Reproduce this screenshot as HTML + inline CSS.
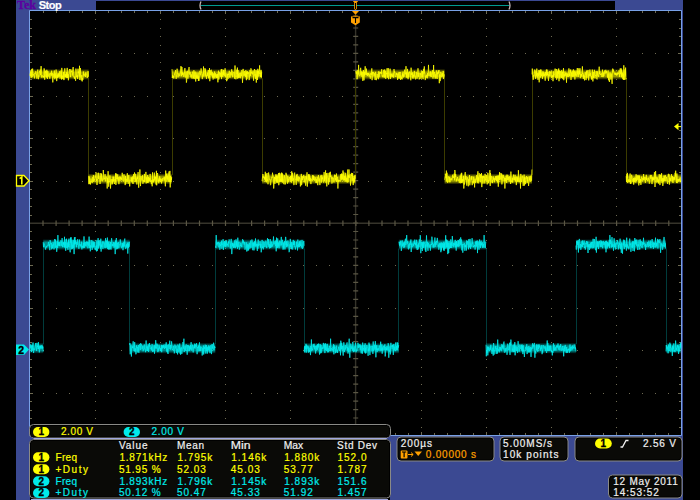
<!DOCTYPE html>
<html><head><meta charset="utf-8"><style>
html,body{margin:0;padding:0;background:#000;width:700px;height:500px;overflow:hidden}
svg{display:block;font-family:"Liberation Sans",sans-serif}
</style></head><body>
<svg width="700" height="500" viewBox="0 0 700 500">
<rect x="0" y="0" width="700" height="500" fill="#000"/>
<rect x="16" y="0" width="667" height="11" fill="#3b4992"/>
<rect x="16" y="0" width="14" height="500" fill="#3b4992"/>
<rect x="390" y="435" width="293" height="65" fill="#3b4992"/>
<rect x="681" y="0" width="2" height="436" fill="#3b4992"/>
<rect x="30" y="11" width="651" height="424" fill="#000"/>
<path d="M29.5 436 V10.5 H681.5 V435.5 H390" stroke="#78a0e6" stroke-width="1" fill="none"/>
<path d="M95 19h1v1h-1zM95 28h1v1h-1zM95 36h1v1h-1zM95 45h1v1h-1zM95 53h1v1h-1zM95 62h1v1h-1zM95 70h1v1h-1zM95 79h1v1h-1zM95 87h1v1h-1zM95 96h1v1h-1zM95 104h1v1h-1zM95 113h1v1h-1zM95 121h1v1h-1zM95 130h1v1h-1zM95 138h1v1h-1zM95 147h1v1h-1zM95 155h1v1h-1zM95 164h1v1h-1zM95 172h1v1h-1zM95 181h1v1h-1zM95 189h1v1h-1zM95 198h1v1h-1zM95 206h1v1h-1zM95 215h1v1h-1zM95 223h1v1h-1zM95 231h1v1h-1zM95 240h1v1h-1zM95 248h1v1h-1zM95 257h1v1h-1zM95 265h1v1h-1zM95 274h1v1h-1zM95 282h1v1h-1zM95 291h1v1h-1zM95 299h1v1h-1zM95 308h1v1h-1zM95 316h1v1h-1zM95 325h1v1h-1zM95 333h1v1h-1zM95 342h1v1h-1zM95 350h1v1h-1zM95 359h1v1h-1zM95 367h1v1h-1zM95 376h1v1h-1zM95 384h1v1h-1zM95 393h1v1h-1zM95 401h1v1h-1zM95 410h1v1h-1zM95 418h1v1h-1zM95 427h1v1h-1zM160 19h1v1h-1zM160 28h1v1h-1zM160 36h1v1h-1zM160 45h1v1h-1zM160 53h1v1h-1zM160 62h1v1h-1zM160 70h1v1h-1zM160 79h1v1h-1zM160 87h1v1h-1zM160 96h1v1h-1zM160 104h1v1h-1zM160 113h1v1h-1zM160 121h1v1h-1zM160 130h1v1h-1zM160 138h1v1h-1zM160 147h1v1h-1zM160 155h1v1h-1zM160 164h1v1h-1zM160 172h1v1h-1zM160 181h1v1h-1zM160 189h1v1h-1zM160 198h1v1h-1zM160 206h1v1h-1zM160 215h1v1h-1zM160 223h1v1h-1zM160 231h1v1h-1zM160 240h1v1h-1zM160 248h1v1h-1zM160 257h1v1h-1zM160 265h1v1h-1zM160 274h1v1h-1zM160 282h1v1h-1zM160 291h1v1h-1zM160 299h1v1h-1zM160 308h1v1h-1zM160 316h1v1h-1zM160 325h1v1h-1zM160 333h1v1h-1zM160 342h1v1h-1zM160 350h1v1h-1zM160 359h1v1h-1zM160 367h1v1h-1zM160 376h1v1h-1zM160 384h1v1h-1zM160 393h1v1h-1zM160 401h1v1h-1zM160 410h1v1h-1zM160 418h1v1h-1zM160 427h1v1h-1zM225 19h1v1h-1zM225 28h1v1h-1zM225 36h1v1h-1zM225 45h1v1h-1zM225 53h1v1h-1zM225 62h1v1h-1zM225 70h1v1h-1zM225 79h1v1h-1zM225 87h1v1h-1zM225 96h1v1h-1zM225 104h1v1h-1zM225 113h1v1h-1zM225 121h1v1h-1zM225 130h1v1h-1zM225 138h1v1h-1zM225 147h1v1h-1zM225 155h1v1h-1zM225 164h1v1h-1zM225 172h1v1h-1zM225 181h1v1h-1zM225 189h1v1h-1zM225 198h1v1h-1zM225 206h1v1h-1zM225 215h1v1h-1zM225 223h1v1h-1zM225 231h1v1h-1zM225 240h1v1h-1zM225 248h1v1h-1zM225 257h1v1h-1zM225 265h1v1h-1zM225 274h1v1h-1zM225 282h1v1h-1zM225 291h1v1h-1zM225 299h1v1h-1zM225 308h1v1h-1zM225 316h1v1h-1zM225 325h1v1h-1zM225 333h1v1h-1zM225 342h1v1h-1zM225 350h1v1h-1zM225 359h1v1h-1zM225 367h1v1h-1zM225 376h1v1h-1zM225 384h1v1h-1zM225 393h1v1h-1zM225 401h1v1h-1zM225 410h1v1h-1zM225 418h1v1h-1zM225 427h1v1h-1zM290 19h1v1h-1zM290 28h1v1h-1zM290 36h1v1h-1zM290 45h1v1h-1zM290 53h1v1h-1zM290 62h1v1h-1zM290 70h1v1h-1zM290 79h1v1h-1zM290 87h1v1h-1zM290 96h1v1h-1zM290 104h1v1h-1zM290 113h1v1h-1zM290 121h1v1h-1zM290 130h1v1h-1zM290 138h1v1h-1zM290 147h1v1h-1zM290 155h1v1h-1zM290 164h1v1h-1zM290 172h1v1h-1zM290 181h1v1h-1zM290 189h1v1h-1zM290 198h1v1h-1zM290 206h1v1h-1zM290 215h1v1h-1zM290 223h1v1h-1zM290 231h1v1h-1zM290 240h1v1h-1zM290 248h1v1h-1zM290 257h1v1h-1zM290 265h1v1h-1zM290 274h1v1h-1zM290 282h1v1h-1zM290 291h1v1h-1zM290 299h1v1h-1zM290 308h1v1h-1zM290 316h1v1h-1zM290 325h1v1h-1zM290 333h1v1h-1zM290 342h1v1h-1zM290 350h1v1h-1zM290 359h1v1h-1zM290 367h1v1h-1zM290 376h1v1h-1zM290 384h1v1h-1zM290 393h1v1h-1zM290 401h1v1h-1zM290 410h1v1h-1zM290 418h1v1h-1zM290 427h1v1h-1zM421 19h1v1h-1zM421 28h1v1h-1zM421 36h1v1h-1zM421 45h1v1h-1zM421 53h1v1h-1zM421 62h1v1h-1zM421 70h1v1h-1zM421 79h1v1h-1zM421 87h1v1h-1zM421 96h1v1h-1zM421 104h1v1h-1zM421 113h1v1h-1zM421 121h1v1h-1zM421 130h1v1h-1zM421 138h1v1h-1zM421 147h1v1h-1zM421 155h1v1h-1zM421 164h1v1h-1zM421 172h1v1h-1zM421 181h1v1h-1zM421 189h1v1h-1zM421 198h1v1h-1zM421 206h1v1h-1zM421 215h1v1h-1zM421 223h1v1h-1zM421 231h1v1h-1zM421 240h1v1h-1zM421 248h1v1h-1zM421 257h1v1h-1zM421 265h1v1h-1zM421 274h1v1h-1zM421 282h1v1h-1zM421 291h1v1h-1zM421 299h1v1h-1zM421 308h1v1h-1zM421 316h1v1h-1zM421 325h1v1h-1zM421 333h1v1h-1zM421 342h1v1h-1zM421 350h1v1h-1zM421 359h1v1h-1zM421 367h1v1h-1zM421 376h1v1h-1zM421 384h1v1h-1zM421 393h1v1h-1zM421 401h1v1h-1zM421 410h1v1h-1zM421 418h1v1h-1zM421 427h1v1h-1zM486 19h1v1h-1zM486 28h1v1h-1zM486 36h1v1h-1zM486 45h1v1h-1zM486 53h1v1h-1zM486 62h1v1h-1zM486 70h1v1h-1zM486 79h1v1h-1zM486 87h1v1h-1zM486 96h1v1h-1zM486 104h1v1h-1zM486 113h1v1h-1zM486 121h1v1h-1zM486 130h1v1h-1zM486 138h1v1h-1zM486 147h1v1h-1zM486 155h1v1h-1zM486 164h1v1h-1zM486 172h1v1h-1zM486 181h1v1h-1zM486 189h1v1h-1zM486 198h1v1h-1zM486 206h1v1h-1zM486 215h1v1h-1zM486 223h1v1h-1zM486 231h1v1h-1zM486 240h1v1h-1zM486 248h1v1h-1zM486 257h1v1h-1zM486 265h1v1h-1zM486 274h1v1h-1zM486 282h1v1h-1zM486 291h1v1h-1zM486 299h1v1h-1zM486 308h1v1h-1zM486 316h1v1h-1zM486 325h1v1h-1zM486 333h1v1h-1zM486 342h1v1h-1zM486 350h1v1h-1zM486 359h1v1h-1zM486 367h1v1h-1zM486 376h1v1h-1zM486 384h1v1h-1zM486 393h1v1h-1zM486 401h1v1h-1zM486 410h1v1h-1zM486 418h1v1h-1zM486 427h1v1h-1zM551 19h1v1h-1zM551 28h1v1h-1zM551 36h1v1h-1zM551 45h1v1h-1zM551 53h1v1h-1zM551 62h1v1h-1zM551 70h1v1h-1zM551 79h1v1h-1zM551 87h1v1h-1zM551 96h1v1h-1zM551 104h1v1h-1zM551 113h1v1h-1zM551 121h1v1h-1zM551 130h1v1h-1zM551 138h1v1h-1zM551 147h1v1h-1zM551 155h1v1h-1zM551 164h1v1h-1zM551 172h1v1h-1zM551 181h1v1h-1zM551 189h1v1h-1zM551 198h1v1h-1zM551 206h1v1h-1zM551 215h1v1h-1zM551 223h1v1h-1zM551 231h1v1h-1zM551 240h1v1h-1zM551 248h1v1h-1zM551 257h1v1h-1zM551 265h1v1h-1zM551 274h1v1h-1zM551 282h1v1h-1zM551 291h1v1h-1zM551 299h1v1h-1zM551 308h1v1h-1zM551 316h1v1h-1zM551 325h1v1h-1zM551 333h1v1h-1zM551 342h1v1h-1zM551 350h1v1h-1zM551 359h1v1h-1zM551 367h1v1h-1zM551 376h1v1h-1zM551 384h1v1h-1zM551 393h1v1h-1zM551 401h1v1h-1zM551 410h1v1h-1zM551 418h1v1h-1zM551 427h1v1h-1zM616 19h1v1h-1zM616 28h1v1h-1zM616 36h1v1h-1zM616 45h1v1h-1zM616 53h1v1h-1zM616 62h1v1h-1zM616 70h1v1h-1zM616 79h1v1h-1zM616 87h1v1h-1zM616 96h1v1h-1zM616 104h1v1h-1zM616 113h1v1h-1zM616 121h1v1h-1zM616 130h1v1h-1zM616 138h1v1h-1zM616 147h1v1h-1zM616 155h1v1h-1zM616 164h1v1h-1zM616 172h1v1h-1zM616 181h1v1h-1zM616 189h1v1h-1zM616 198h1v1h-1zM616 206h1v1h-1zM616 215h1v1h-1zM616 223h1v1h-1zM616 231h1v1h-1zM616 240h1v1h-1zM616 248h1v1h-1zM616 257h1v1h-1zM616 265h1v1h-1zM616 274h1v1h-1zM616 282h1v1h-1zM616 291h1v1h-1zM616 299h1v1h-1zM616 308h1v1h-1zM616 316h1v1h-1zM616 325h1v1h-1zM616 333h1v1h-1zM616 342h1v1h-1zM616 350h1v1h-1zM616 359h1v1h-1zM616 367h1v1h-1zM616 376h1v1h-1zM616 384h1v1h-1zM616 393h1v1h-1zM616 401h1v1h-1zM616 410h1v1h-1zM616 418h1v1h-1zM616 427h1v1h-1zM43 53h1v1h-1zM56 53h1v1h-1zM69 53h1v1h-1zM82 53h1v1h-1zM108 53h1v1h-1zM121 53h1v1h-1zM134 53h1v1h-1zM147 53h1v1h-1zM173 53h1v1h-1zM186 53h1v1h-1zM199 53h1v1h-1zM212 53h1v1h-1zM238 53h1v1h-1zM251 53h1v1h-1zM264 53h1v1h-1zM277 53h1v1h-1zM303 53h1v1h-1zM316 53h1v1h-1zM329 53h1v1h-1zM342 53h1v1h-1zM368 53h1v1h-1zM381 53h1v1h-1zM395 53h1v1h-1zM408 53h1v1h-1zM434 53h1v1h-1zM447 53h1v1h-1zM460 53h1v1h-1zM473 53h1v1h-1zM499 53h1v1h-1zM512 53h1v1h-1zM525 53h1v1h-1zM538 53h1v1h-1zM564 53h1v1h-1zM577 53h1v1h-1zM590 53h1v1h-1zM603 53h1v1h-1zM629 53h1v1h-1zM642 53h1v1h-1zM655 53h1v1h-1zM668 53h1v1h-1zM43 96h1v1h-1zM56 96h1v1h-1zM69 96h1v1h-1zM82 96h1v1h-1zM108 96h1v1h-1zM121 96h1v1h-1zM134 96h1v1h-1zM147 96h1v1h-1zM173 96h1v1h-1zM186 96h1v1h-1zM199 96h1v1h-1zM212 96h1v1h-1zM238 96h1v1h-1zM251 96h1v1h-1zM264 96h1v1h-1zM277 96h1v1h-1zM303 96h1v1h-1zM316 96h1v1h-1zM329 96h1v1h-1zM342 96h1v1h-1zM368 96h1v1h-1zM381 96h1v1h-1zM395 96h1v1h-1zM408 96h1v1h-1zM434 96h1v1h-1zM447 96h1v1h-1zM460 96h1v1h-1zM473 96h1v1h-1zM499 96h1v1h-1zM512 96h1v1h-1zM525 96h1v1h-1zM538 96h1v1h-1zM564 96h1v1h-1zM577 96h1v1h-1zM590 96h1v1h-1zM603 96h1v1h-1zM629 96h1v1h-1zM642 96h1v1h-1zM655 96h1v1h-1zM668 96h1v1h-1zM43 138h1v1h-1zM56 138h1v1h-1zM69 138h1v1h-1zM82 138h1v1h-1zM108 138h1v1h-1zM121 138h1v1h-1zM134 138h1v1h-1zM147 138h1v1h-1zM173 138h1v1h-1zM186 138h1v1h-1zM199 138h1v1h-1zM212 138h1v1h-1zM238 138h1v1h-1zM251 138h1v1h-1zM264 138h1v1h-1zM277 138h1v1h-1zM303 138h1v1h-1zM316 138h1v1h-1zM329 138h1v1h-1zM342 138h1v1h-1zM368 138h1v1h-1zM381 138h1v1h-1zM395 138h1v1h-1zM408 138h1v1h-1zM434 138h1v1h-1zM447 138h1v1h-1zM460 138h1v1h-1zM473 138h1v1h-1zM499 138h1v1h-1zM512 138h1v1h-1zM525 138h1v1h-1zM538 138h1v1h-1zM564 138h1v1h-1zM577 138h1v1h-1zM590 138h1v1h-1zM603 138h1v1h-1zM629 138h1v1h-1zM642 138h1v1h-1zM655 138h1v1h-1zM668 138h1v1h-1zM43 181h1v1h-1zM56 181h1v1h-1zM69 181h1v1h-1zM82 181h1v1h-1zM108 181h1v1h-1zM121 181h1v1h-1zM134 181h1v1h-1zM147 181h1v1h-1zM173 181h1v1h-1zM186 181h1v1h-1zM199 181h1v1h-1zM212 181h1v1h-1zM238 181h1v1h-1zM251 181h1v1h-1zM264 181h1v1h-1zM277 181h1v1h-1zM303 181h1v1h-1zM316 181h1v1h-1zM329 181h1v1h-1zM342 181h1v1h-1zM368 181h1v1h-1zM381 181h1v1h-1zM395 181h1v1h-1zM408 181h1v1h-1zM434 181h1v1h-1zM447 181h1v1h-1zM460 181h1v1h-1zM473 181h1v1h-1zM499 181h1v1h-1zM512 181h1v1h-1zM525 181h1v1h-1zM538 181h1v1h-1zM564 181h1v1h-1zM577 181h1v1h-1zM590 181h1v1h-1zM603 181h1v1h-1zM629 181h1v1h-1zM642 181h1v1h-1zM655 181h1v1h-1zM668 181h1v1h-1zM43 265h1v1h-1zM56 265h1v1h-1zM69 265h1v1h-1zM82 265h1v1h-1zM108 265h1v1h-1zM121 265h1v1h-1zM134 265h1v1h-1zM147 265h1v1h-1zM173 265h1v1h-1zM186 265h1v1h-1zM199 265h1v1h-1zM212 265h1v1h-1zM238 265h1v1h-1zM251 265h1v1h-1zM264 265h1v1h-1zM277 265h1v1h-1zM303 265h1v1h-1zM316 265h1v1h-1zM329 265h1v1h-1zM342 265h1v1h-1zM368 265h1v1h-1zM381 265h1v1h-1zM395 265h1v1h-1zM408 265h1v1h-1zM434 265h1v1h-1zM447 265h1v1h-1zM460 265h1v1h-1zM473 265h1v1h-1zM499 265h1v1h-1zM512 265h1v1h-1zM525 265h1v1h-1zM538 265h1v1h-1zM564 265h1v1h-1zM577 265h1v1h-1zM590 265h1v1h-1zM603 265h1v1h-1zM629 265h1v1h-1zM642 265h1v1h-1zM655 265h1v1h-1zM668 265h1v1h-1zM43 308h1v1h-1zM56 308h1v1h-1zM69 308h1v1h-1zM82 308h1v1h-1zM108 308h1v1h-1zM121 308h1v1h-1zM134 308h1v1h-1zM147 308h1v1h-1zM173 308h1v1h-1zM186 308h1v1h-1zM199 308h1v1h-1zM212 308h1v1h-1zM238 308h1v1h-1zM251 308h1v1h-1zM264 308h1v1h-1zM277 308h1v1h-1zM303 308h1v1h-1zM316 308h1v1h-1zM329 308h1v1h-1zM342 308h1v1h-1zM368 308h1v1h-1zM381 308h1v1h-1zM395 308h1v1h-1zM408 308h1v1h-1zM434 308h1v1h-1zM447 308h1v1h-1zM460 308h1v1h-1zM473 308h1v1h-1zM499 308h1v1h-1zM512 308h1v1h-1zM525 308h1v1h-1zM538 308h1v1h-1zM564 308h1v1h-1zM577 308h1v1h-1zM590 308h1v1h-1zM603 308h1v1h-1zM629 308h1v1h-1zM642 308h1v1h-1zM655 308h1v1h-1zM668 308h1v1h-1zM43 350h1v1h-1zM56 350h1v1h-1zM69 350h1v1h-1zM82 350h1v1h-1zM108 350h1v1h-1zM121 350h1v1h-1zM134 350h1v1h-1zM147 350h1v1h-1zM173 350h1v1h-1zM186 350h1v1h-1zM199 350h1v1h-1zM212 350h1v1h-1zM238 350h1v1h-1zM251 350h1v1h-1zM264 350h1v1h-1zM277 350h1v1h-1zM303 350h1v1h-1zM316 350h1v1h-1zM329 350h1v1h-1zM342 350h1v1h-1zM368 350h1v1h-1zM381 350h1v1h-1zM395 350h1v1h-1zM408 350h1v1h-1zM434 350h1v1h-1zM447 350h1v1h-1zM460 350h1v1h-1zM473 350h1v1h-1zM499 350h1v1h-1zM512 350h1v1h-1zM525 350h1v1h-1zM538 350h1v1h-1zM564 350h1v1h-1zM577 350h1v1h-1zM590 350h1v1h-1zM603 350h1v1h-1zM629 350h1v1h-1zM642 350h1v1h-1zM655 350h1v1h-1zM668 350h1v1h-1zM43 393h1v1h-1zM56 393h1v1h-1zM69 393h1v1h-1zM82 393h1v1h-1zM108 393h1v1h-1zM121 393h1v1h-1zM134 393h1v1h-1zM147 393h1v1h-1zM173 393h1v1h-1zM186 393h1v1h-1zM199 393h1v1h-1zM212 393h1v1h-1zM238 393h1v1h-1zM251 393h1v1h-1zM264 393h1v1h-1zM277 393h1v1h-1zM303 393h1v1h-1zM316 393h1v1h-1zM329 393h1v1h-1zM342 393h1v1h-1zM368 393h1v1h-1zM381 393h1v1h-1zM395 393h1v1h-1zM408 393h1v1h-1zM434 393h1v1h-1zM447 393h1v1h-1zM460 393h1v1h-1zM473 393h1v1h-1zM499 393h1v1h-1zM512 393h1v1h-1zM525 393h1v1h-1zM538 393h1v1h-1zM564 393h1v1h-1zM577 393h1v1h-1zM590 393h1v1h-1zM603 393h1v1h-1zM629 393h1v1h-1zM642 393h1v1h-1zM655 393h1v1h-1zM668 393h1v1h-1zM43 11h1v2h-1zM43 433h1v2h-1zM30 19h2v1h-2zM679 19h2v1h-2zM56 11h1v2h-1zM56 433h1v2h-1zM30 28h2v1h-2zM679 28h2v1h-2zM69 11h1v2h-1zM69 433h1v2h-1zM30 36h2v1h-2zM679 36h2v1h-2zM82 11h1v2h-1zM82 433h1v2h-1zM30 45h2v1h-2zM679 45h2v1h-2zM95 11h1v3h-1zM95 432h1v3h-1zM30 53h3v1h-3zM678 53h3v1h-3zM108 11h1v2h-1zM108 433h1v2h-1zM30 62h2v1h-2zM679 62h2v1h-2zM121 11h1v2h-1zM121 433h1v2h-1zM30 70h2v1h-2zM679 70h2v1h-2zM134 11h1v2h-1zM134 433h1v2h-1zM30 79h2v1h-2zM679 79h2v1h-2zM147 11h1v2h-1zM147 433h1v2h-1zM30 87h2v1h-2zM679 87h2v1h-2zM160 11h1v3h-1zM160 432h1v3h-1zM30 96h3v1h-3zM678 96h3v1h-3zM173 11h1v2h-1zM173 433h1v2h-1zM30 104h2v1h-2zM679 104h2v1h-2zM186 11h1v2h-1zM186 433h1v2h-1zM30 113h2v1h-2zM679 113h2v1h-2zM199 11h1v2h-1zM199 433h1v2h-1zM30 121h2v1h-2zM679 121h2v1h-2zM212 11h1v2h-1zM212 433h1v2h-1zM30 130h2v1h-2zM679 130h2v1h-2zM225 11h1v3h-1zM225 432h1v3h-1zM30 138h3v1h-3zM678 138h3v1h-3zM238 11h1v2h-1zM238 433h1v2h-1zM30 147h2v1h-2zM679 147h2v1h-2zM251 11h1v2h-1zM251 433h1v2h-1zM30 155h2v1h-2zM679 155h2v1h-2zM264 11h1v2h-1zM264 433h1v2h-1zM30 164h2v1h-2zM679 164h2v1h-2zM277 11h1v2h-1zM277 433h1v2h-1zM30 172h2v1h-2zM679 172h2v1h-2zM290 11h1v3h-1zM290 432h1v3h-1zM30 181h3v1h-3zM678 181h3v1h-3zM303 11h1v2h-1zM303 433h1v2h-1zM30 189h2v1h-2zM679 189h2v1h-2zM316 11h1v2h-1zM316 433h1v2h-1zM30 198h2v1h-2zM679 198h2v1h-2zM329 11h1v2h-1zM329 433h1v2h-1zM30 206h2v1h-2zM679 206h2v1h-2zM342 11h1v2h-1zM342 433h1v2h-1zM30 215h2v1h-2zM679 215h2v1h-2zM355 11h1v3h-1zM355 432h1v3h-1zM30 223h3v1h-3zM678 223h3v1h-3zM368 11h1v2h-1zM368 433h1v2h-1zM30 231h2v1h-2zM679 231h2v1h-2zM381 11h1v2h-1zM381 433h1v2h-1zM30 240h2v1h-2zM679 240h2v1h-2zM395 11h1v2h-1zM395 433h1v2h-1zM30 248h2v1h-2zM679 248h2v1h-2zM408 11h1v2h-1zM408 433h1v2h-1zM30 257h2v1h-2zM679 257h2v1h-2zM421 11h1v3h-1zM421 432h1v3h-1zM30 265h3v1h-3zM678 265h3v1h-3zM434 11h1v2h-1zM434 433h1v2h-1zM30 274h2v1h-2zM679 274h2v1h-2zM447 11h1v2h-1zM447 433h1v2h-1zM30 282h2v1h-2zM679 282h2v1h-2zM460 11h1v2h-1zM460 433h1v2h-1zM30 291h2v1h-2zM679 291h2v1h-2zM473 11h1v2h-1zM473 433h1v2h-1zM30 299h2v1h-2zM679 299h2v1h-2zM486 11h1v3h-1zM486 432h1v3h-1zM30 308h3v1h-3zM678 308h3v1h-3zM499 11h1v2h-1zM499 433h1v2h-1zM30 316h2v1h-2zM679 316h2v1h-2zM512 11h1v2h-1zM512 433h1v2h-1zM30 325h2v1h-2zM679 325h2v1h-2zM525 11h1v2h-1zM525 433h1v2h-1zM30 333h2v1h-2zM679 333h2v1h-2zM538 11h1v2h-1zM538 433h1v2h-1zM30 342h2v1h-2zM679 342h2v1h-2zM551 11h1v3h-1zM551 432h1v3h-1zM30 350h3v1h-3zM678 350h3v1h-3zM564 11h1v2h-1zM564 433h1v2h-1zM30 359h2v1h-2zM679 359h2v1h-2zM577 11h1v2h-1zM577 433h1v2h-1zM30 367h2v1h-2zM679 367h2v1h-2zM590 11h1v2h-1zM590 433h1v2h-1zM30 376h2v1h-2zM679 376h2v1h-2zM603 11h1v2h-1zM603 433h1v2h-1zM30 384h2v1h-2zM679 384h2v1h-2zM616 11h1v3h-1zM616 432h1v3h-1zM30 393h3v1h-3zM678 393h3v1h-3zM629 11h1v2h-1zM629 433h1v2h-1zM30 401h2v1h-2zM679 401h2v1h-2zM642 11h1v2h-1zM642 433h1v2h-1zM30 410h2v1h-2zM679 410h2v1h-2zM655 11h1v2h-1zM655 433h1v2h-1zM30 418h2v1h-2zM679 418h2v1h-2zM668 11h1v2h-1zM668 433h1v2h-1zM30 427h2v1h-2zM679 427h2v1h-2z" fill="#6e6a52" opacity="1"/>
<path d="M355.6 11 V435 M30 223.2 H681" stroke="#36342b" stroke-width="1.4"/>
<path d="M353.2 19.5h5M43.0 220.4v5.6M353.2 28.0h5M56.1 220.4v5.6M353.2 36.4h5M69.1 220.4v5.6M353.2 44.9h5M82.1 220.4v5.6M353.2 53.4h5M95.2 220.4v5.6M353.2 61.9h5M108.2 220.4v5.6M353.2 70.4h5M121.3 220.4v5.6M353.2 78.8h5M134.3 220.4v5.6M353.2 87.3h5M147.3 220.4v5.6M353.2 95.8h5M160.4 220.4v5.6M353.2 104.3h5M173.4 220.4v5.6M353.2 112.8h5M186.4 220.4v5.6M353.2 121.2h5M199.5 220.4v5.6M353.2 129.7h5M212.5 220.4v5.6M353.2 138.2h5M225.5 220.4v5.6M353.2 146.7h5M238.6 220.4v5.6M353.2 155.2h5M251.6 220.4v5.6M353.2 163.6h5M264.6 220.4v5.6M353.2 172.1h5M277.7 220.4v5.6M353.2 180.6h5M290.7 220.4v5.6M353.2 189.1h5M303.8 220.4v5.6M353.2 197.6h5M316.8 220.4v5.6M353.2 206.0h5M329.8 220.4v5.6M353.2 214.5h5M342.9 220.4v5.6M353.2 223.0h5M355.9 220.4v5.6M353.2 231.5h5M368.9 220.4v5.6M353.2 240.0h5M382.0 220.4v5.6M353.2 248.4h5M395.0 220.4v5.6M353.2 256.9h5M408.0 220.4v5.6M353.2 265.4h5M421.1 220.4v5.6M353.2 273.9h5M434.1 220.4v5.6M353.2 282.4h5M447.2 220.4v5.6M353.2 290.8h5M460.2 220.4v5.6M353.2 299.3h5M473.2 220.4v5.6M353.2 307.8h5M486.3 220.4v5.6M353.2 316.3h5M499.3 220.4v5.6M353.2 324.8h5M512.3 220.4v5.6M353.2 333.2h5M525.4 220.4v5.6M353.2 341.7h5M538.4 220.4v5.6M353.2 350.2h5M551.4 220.4v5.6M353.2 358.7h5M564.5 220.4v5.6M353.2 367.2h5M577.5 220.4v5.6M353.2 375.6h5M590.5 220.4v5.6M353.2 384.1h5M603.6 220.4v5.6M353.2 392.6h5M616.6 220.4v5.6M353.2 401.1h5M629.7 220.4v5.6M353.2 409.6h5M642.7 220.4v5.6M353.2 418.0h5M655.7 220.4v5.6M353.2 426.5h5M668.8 220.4v5.6" stroke="#5a5644" stroke-width="1.2"/>
<path d="M88.5 78.4V175.0M172.5 78.4V175.0M262.5 78.4V175.0M355.5 78.4V175.0M444.5 78.4V175.0M532.5 78.4V175.0M626.5 78.4V175.0" stroke="#3c3c00" stroke-width="1" fill="none"/>
<linearGradient id="gffff00" x1="0" y1="0" x2="0" y2="1"><stop offset="0" stop-color="#ffff00" stop-opacity="0"/><stop offset="0.3" stop-color="#ffff00" stop-opacity="0.6"/><stop offset="0.7" stop-color="#ffff00" stop-opacity="0.6"/><stop offset="1" stop-color="#ffff00" stop-opacity="0"/></linearGradient>
<rect x="30.0" y="68.9" width="58.6" height="11" fill="url(#gffff00)"/>
<rect x="88.6" y="173.5" width="83.4" height="11" fill="url(#gffff00)"/>
<rect x="172.0" y="68.9" width="90.0" height="11" fill="url(#gffff00)"/>
<rect x="262.0" y="173.5" width="93.6" height="11" fill="url(#gffff00)"/>
<rect x="355.6" y="68.9" width="89.0" height="11" fill="url(#gffff00)"/>
<rect x="444.6" y="173.5" width="87.4" height="11" fill="url(#gffff00)"/>
<rect x="532.0" y="68.9" width="94.2" height="11" fill="url(#gffff00)"/>
<rect x="626.2" y="173.5" width="54.8" height="11" fill="url(#gffff00)"/>
<path d="M30.00 73.6L30.30 76.1L30.60 71.3L30.90 73.7L31.20 77.8L31.50 75.2L31.80 68.9L32.10 77.2L32.40 68.8L32.70 68.6L33.00 75.4L33.30 74.2L33.60 75.4L33.90 75.7L34.20 76.2L34.50 78.4L34.80 73.3L35.10 74.0L35.40 72.9L35.70 71.2L36.00 71.7L36.30 75.2L36.60 74.6L36.90 78.7L37.20 74.0L37.50 71.7L37.80 69.6L38.10 77.1L38.40 79.2L38.70 75.6L39.00 76.4L39.30 72.4L39.60 71.2L39.90 72.6L40.20 69.6L40.50 75.2L40.80 68.1L41.10 66.1L41.40 68.1L41.70 77.6L42.00 75.2L42.30 75.8L42.60 76.1L42.90 76.2L43.20 77.6L43.50 76.1L43.80 77.2L44.10 68.4L44.40 70.1L44.70 79.7L45.00 75.5L45.30 76.5L45.60 70.7L45.90 73.0L46.20 71.5L46.50 77.5L46.80 69.8L47.10 74.0L47.40 79.0L47.70 71.0L48.00 71.8L48.30 76.5L48.60 75.5L48.90 74.9L49.20 73.4L49.50 75.3L49.80 78.7L50.10 76.3L50.40 73.0L50.70 73.2L51.00 73.3L51.30 75.7L51.60 70.7L51.90 75.2L52.20 73.0L52.50 76.6L52.80 82.4L53.10 75.6L53.40 73.7L53.70 74.2L54.00 77.7L54.30 70.5L54.60 77.2L54.90 79.3L55.20 73.3L55.50 76.5L55.80 78.0L56.10 69.6L56.40 75.0L56.70 81.1L57.00 77.0L57.30 74.9L57.60 77.9L57.90 73.4L58.20 77.4L58.50 73.5L58.80 75.1L59.10 76.5L59.40 76.4L59.70 71.2L60.00 78.6L60.30 76.9L60.60 74.4L60.90 70.6L61.20 71.5L61.50 79.5L61.80 67.9L62.10 79.0L62.40 75.7L62.70 75.8L63.00 78.1L63.30 79.3L63.60 71.9L63.90 80.1L64.20 79.1L64.50 73.5L64.80 68.3L65.10 77.1L65.40 74.4L65.70 77.1L66.00 74.2L66.30 77.8L66.60 72.2L66.90 77.3L67.20 67.9L67.50 77.9L67.80 73.8L68.10 74.3L68.40 80.3L68.70 74.5L69.00 73.7L69.30 70.2L69.60 69.0L69.90 72.4L70.20 74.4L70.50 77.1L70.80 69.2L71.10 72.3L71.40 71.4L71.70 71.9L72.00 70.5L72.30 75.6L72.60 72.3L72.90 68.0L73.20 67.0L73.50 71.5L73.80 77.0L74.10 76.9L74.40 78.8L74.70 76.6L75.00 77.4L75.30 78.7L75.60 80.8L75.90 68.6L76.20 71.3L76.50 76.7L76.80 76.3L77.10 77.4L77.40 75.4L77.70 79.0L78.00 68.7L78.30 73.2L78.60 71.6L78.90 71.6L79.20 76.5L79.50 65.8L79.80 80.0L80.10 75.8L80.40 68.0L80.70 77.8L81.00 78.8L81.30 80.4L81.60 75.4L81.90 75.0L82.20 81.4L82.50 77.8L82.80 80.0L83.10 77.7L83.40 71.5L83.70 75.3L84.00 74.2L84.30 76.1L84.60 75.9L84.90 75.6L85.20 73.3L85.50 77.0L85.80 72.3L86.10 74.4L86.40 74.4L86.70 75.0L87.00 75.8L87.30 77.9L87.60 75.9L87.90 71.2L88.20 71.3L88.50 76.8M88.60 175.6L88.90 184.2L89.20 176.5L89.50 180.7L89.80 183.9L90.10 181.3L90.40 184.5L90.70 182.2L91.00 178.5L91.30 181.4L91.60 181.0L91.90 182.0L92.20 183.1L92.50 178.3L92.80 177.1L93.10 181.9L93.40 175.1L93.70 179.6L94.00 181.6L94.30 179.1L94.60 179.7L94.90 179.2L95.20 175.5L95.50 176.9L95.80 177.6L96.10 172.4L96.40 180.9L96.70 178.8L97.00 185.0L97.30 180.7L97.60 178.4L97.90 173.0L98.20 172.7L98.50 178.8L98.80 173.0L99.10 175.5L99.40 179.1L99.70 179.8L100.00 184.0L100.30 182.8L100.60 175.5L100.90 173.0L101.20 180.6L101.50 173.8L101.80 178.3L102.10 178.0L102.40 181.3L102.70 180.2L103.00 178.4L103.30 170.0L103.60 174.0L103.90 179.7L104.20 178.2L104.50 178.0L104.80 178.9L105.10 174.2L105.40 181.4L105.70 180.0L106.00 177.8L106.30 176.6L106.60 177.4L106.90 179.3L107.20 188.5L107.50 177.9L107.80 182.7L108.10 171.2L108.40 181.0L108.70 186.7L109.00 181.5L109.30 182.1L109.60 180.7L109.90 175.4L110.20 179.8L110.50 188.5L110.80 182.8L111.10 179.1L111.40 180.9L111.70 181.3L112.00 184.5L112.30 179.1L112.60 183.7L112.90 176.7L113.20 176.7L113.50 181.4L113.80 176.8L114.10 181.7L114.40 184.0L114.70 182.7L115.00 179.0L115.30 181.6L115.60 173.2L115.90 184.9L116.20 174.0L116.50 173.7L116.80 178.8L117.10 178.0L117.40 179.1L117.70 174.3L118.00 180.5L118.30 178.2L118.60 177.4L118.90 184.2L119.20 177.4L119.50 176.7L119.80 180.0L120.10 180.7L120.40 176.7L120.70 179.0L121.00 177.3L121.30 179.6L121.60 178.2L121.90 180.2L122.20 172.8L122.50 176.1L122.80 175.6L123.10 181.1L123.40 181.5L123.70 180.0L124.00 174.3L124.30 178.9L124.60 178.7L124.90 181.5L125.20 185.1L125.50 175.9L125.80 184.1L126.10 180.0L126.40 178.9L126.70 179.0L127.00 182.0L127.30 173.2L127.60 180.5L127.90 180.2L128.20 183.9L128.50 177.1L128.80 175.0L129.10 180.1L129.40 179.8L129.70 186.4L130.00 180.7L130.30 180.8L130.60 180.0L130.90 179.8L131.20 177.2L131.50 181.6L131.80 177.8L132.10 182.5L132.40 181.8L132.70 176.5L133.00 184.0L133.30 176.9L133.60 174.1L133.90 179.1L134.20 175.3L134.50 172.5L134.80 177.2L135.10 181.9L135.40 180.6L135.70 173.8L136.00 181.8L136.30 178.5L136.60 180.0L136.90 184.5L137.20 176.9L137.50 179.1L137.80 174.9L138.10 172.1L138.40 181.1L138.70 187.7L139.00 182.1L139.30 180.2L139.60 177.8L139.90 169.5L140.20 182.0L140.50 186.1L140.80 177.4L141.10 176.2L141.40 179.1L141.70 179.2L142.00 180.6L142.30 178.5L142.60 175.2L142.90 183.8L143.20 182.6L143.50 180.1L143.80 180.1L144.10 181.9L144.40 173.9L144.70 182.2L145.00 180.2L145.30 179.3L145.60 178.9L145.90 171.9L146.20 183.4L146.50 177.8L146.80 177.2L147.10 181.4L147.40 183.0L147.70 175.0L148.00 179.4L148.30 182.7L148.60 177.1L148.90 180.6L149.20 180.9L149.50 178.1L149.80 181.5L150.10 173.9L150.40 177.7L150.70 181.8L151.00 180.8L151.30 184.2L151.60 183.1L151.90 179.9L152.20 186.3L152.50 172.4L152.80 182.2L153.10 181.2L153.40 179.3L153.70 182.4L154.00 178.9L154.30 172.6L154.60 180.5L154.90 176.7L155.20 178.8L155.50 176.8L155.80 182.9L156.10 184.6L156.40 170.8L156.70 185.3L157.00 180.7L157.30 174.5L157.60 173.0L157.90 180.0L158.20 181.7L158.50 179.7L158.80 183.3L159.10 178.3L159.40 181.4L159.70 176.3L160.00 180.5L160.30 178.5L160.60 179.6L160.90 182.1L161.20 178.9L161.50 183.5L161.80 181.9L162.10 179.2L162.40 178.2L162.70 181.1L163.00 180.4L163.30 179.6L163.60 178.1L163.90 177.9L164.20 176.7L164.50 180.4L164.80 177.4L165.10 182.9L165.40 186.3L165.70 170.6L166.00 178.5L166.30 176.8L166.60 173.6L166.90 181.8L167.20 175.8L167.50 179.5L167.80 174.4L168.10 173.4L168.40 176.3L168.70 181.8L169.00 171.5L169.30 178.0L169.60 181.9L169.90 170.9L170.20 187.4L170.50 175.9L170.80 181.9L171.10 177.5L171.40 179.9L171.70 177.3M172.00 69.1L172.30 78.0L172.60 75.1L172.90 77.7L173.20 76.2L173.50 76.1L173.80 78.5L174.10 75.5L174.40 75.3L174.70 73.0L175.00 72.4L175.30 72.4L175.60 70.1L175.90 76.6L176.20 78.9L176.50 75.1L176.80 74.9L177.10 68.7L177.40 72.9L177.70 74.7L178.00 77.4L178.30 76.3L178.60 73.5L178.90 73.4L179.20 73.3L179.50 74.3L179.80 76.1L180.10 73.9L180.40 73.7L180.70 68.4L181.00 66.1L181.30 74.8L181.60 76.2L181.90 67.0L182.20 74.5L182.50 72.5L182.80 75.1L183.10 72.7L183.40 75.1L183.70 76.9L184.00 76.4L184.30 74.9L184.60 71.4L184.90 68.1L185.20 77.4L185.50 77.1L185.80 77.3L186.10 71.4L186.40 82.6L186.70 80.7L187.00 75.2L187.30 71.9L187.60 70.8L187.90 78.7L188.20 74.4L188.50 73.4L188.80 68.3L189.10 67.1L189.40 74.3L189.70 74.6L190.00 71.8L190.30 72.1L190.60 76.0L190.90 77.4L191.20 77.5L191.50 74.5L191.80 75.1L192.10 78.7L192.40 71.7L192.70 71.8L193.00 74.5L193.30 76.3L193.60 78.4L193.90 70.2L194.20 79.1L194.50 74.7L194.80 72.2L195.10 71.6L195.40 74.5L195.70 81.5L196.00 72.4L196.30 75.8L196.60 78.6L196.90 74.7L197.20 75.8L197.50 78.7L197.80 75.2L198.10 72.5L198.40 81.0L198.70 76.5L199.00 80.8L199.30 74.7L199.60 74.2L199.90 70.8L200.20 74.5L200.50 75.3L200.80 72.2L201.10 68.4L201.40 71.1L201.70 73.2L202.00 73.9L202.30 79.1L202.60 74.8L202.90 74.0L203.20 74.1L203.50 66.5L203.80 76.5L204.10 72.4L204.40 70.9L204.70 70.7L205.00 68.2L205.30 75.6L205.60 69.5L205.90 76.4L206.20 75.5L206.50 78.9L206.80 74.9L207.10 75.0L207.40 72.7L207.70 75.9L208.00 72.7L208.30 70.0L208.60 78.4L208.90 76.2L209.20 77.3L209.50 68.1L209.80 81.2L210.10 70.3L210.40 75.1L210.70 75.0L211.00 70.3L211.30 69.8L211.60 75.6L211.90 75.3L212.20 71.9L212.50 77.5L212.80 73.3L213.10 79.5L213.40 78.2L213.70 73.5L214.00 77.7L214.30 75.1L214.60 71.5L214.90 78.6L215.20 75.3L215.50 73.3L215.80 76.6L216.10 74.4L216.40 78.2L216.70 74.5L217.00 75.9L217.30 77.9L217.60 73.9L217.90 82.3L218.20 73.2L218.50 70.7L218.80 79.5L219.10 77.2L219.40 72.3L219.70 72.2L220.00 75.5L220.30 72.9L220.60 75.1L220.90 76.9L221.20 69.4L221.50 79.1L221.80 69.0L222.10 73.3L222.40 72.7L222.70 76.8L223.00 71.6L223.30 69.8L223.60 75.0L223.90 70.1L224.20 76.2L224.50 72.8L224.80 72.6L225.10 68.3L225.40 74.4L225.70 77.3L226.00 73.4L226.30 76.3L226.60 81.2L226.90 79.4L227.20 80.2L227.50 73.8L227.80 76.0L228.10 78.8L228.40 73.7L228.70 75.0L229.00 73.0L229.30 70.8L229.60 77.2L229.90 77.9L230.20 77.3L230.50 72.5L230.80 72.3L231.10 75.5L231.40 75.2L231.70 69.3L232.00 72.1L232.30 71.6L232.60 77.2L232.90 76.4L233.20 72.7L233.50 72.6L233.80 72.0L234.10 72.1L234.40 76.4L234.70 78.8L235.00 65.5L235.30 75.0L235.60 77.5L235.90 79.3L236.20 77.9L236.50 77.0L236.80 69.7L237.10 74.0L237.40 67.6L237.70 78.7L238.00 70.0L238.30 77.9L238.60 73.7L238.90 75.3L239.20 77.8L239.50 74.7L239.80 72.8L240.10 76.5L240.40 78.2L240.70 72.9L241.00 72.6L241.30 75.8L241.60 76.1L241.90 70.0L242.20 75.7L242.50 82.8L242.80 76.9L243.10 68.9L243.40 72.8L243.70 73.9L244.00 75.9L244.30 72.3L244.60 71.2L244.90 75.3L245.20 73.9L245.50 76.8L245.80 70.2L246.10 76.4L246.40 80.2L246.70 71.6L247.00 79.2L247.30 71.2L247.60 73.7L247.90 74.0L248.20 73.0L248.50 72.3L248.80 75.0L249.10 80.1L249.40 79.2L249.70 71.1L250.00 69.9L250.30 70.8L250.60 75.9L250.90 68.3L251.20 69.1L251.50 73.4L251.80 72.0L252.10 73.5L252.40 73.3L252.70 74.4L253.00 70.5L253.30 74.6L253.60 80.7L253.90 74.7L254.20 71.2L254.50 69.0L254.80 75.7L255.10 74.1L255.40 78.9L255.70 75.2L256.00 69.9L256.30 82.6L256.60 75.1L256.90 73.9L257.20 70.9L257.50 80.0L257.80 68.8L258.10 73.5L258.40 70.7L258.70 76.4L259.00 76.0L259.30 71.4L259.60 65.4L259.90 74.0L260.20 73.0L260.50 76.9L260.80 70.6L261.10 70.1L261.40 77.5L261.70 71.7M262.00 181.1L262.30 179.1L262.60 175.8L262.90 174.1L263.20 175.6L263.50 175.9L263.80 178.0L264.10 176.9L264.40 179.1L264.70 177.5L265.00 180.1L265.30 171.8L265.60 181.6L265.90 173.8L266.20 177.9L266.50 182.3L266.80 174.2L267.10 173.0L267.40 180.6L267.70 179.4L268.00 184.3L268.30 177.2L268.60 172.5L268.90 174.8L269.20 177.7L269.50 179.8L269.80 179.6L270.10 179.5L270.40 185.2L270.70 184.9L271.00 179.4L271.30 179.5L271.60 178.8L271.90 176.9L272.20 177.5L272.50 172.7L272.80 175.4L273.10 175.2L273.40 178.8L273.70 188.5L274.00 183.8L274.30 179.4L274.60 177.0L274.90 183.9L275.20 177.8L275.50 179.1L275.80 174.4L276.10 180.9L276.40 175.9L276.70 182.6L277.00 174.6L277.30 182.8L277.60 176.5L277.90 177.9L278.20 177.2L278.50 173.1L278.80 185.2L279.10 178.1L279.40 172.8L279.70 182.0L280.00 173.4L280.30 174.8L280.60 181.6L280.90 179.0L281.20 181.8L281.50 172.7L281.80 181.5L282.10 172.9L282.40 182.6L282.70 174.2L283.00 178.2L283.30 180.1L283.60 180.7L283.90 184.2L284.20 175.1L284.50 175.9L284.80 178.8L285.10 184.5L285.40 184.1L285.70 182.1L286.00 172.8L286.30 175.6L286.60 174.6L286.90 179.6L287.20 181.2L287.50 183.6L287.80 175.7L288.10 181.3L288.40 182.2L288.70 178.9L289.00 179.4L289.30 177.1L289.60 178.3L289.90 178.9L290.20 181.5L290.50 176.2L290.80 179.6L291.10 175.6L291.40 182.6L291.70 171.3L292.00 179.6L292.30 181.0L292.60 172.8L292.90 176.6L293.20 180.0L293.50 178.4L293.80 185.1L294.10 184.7L294.40 173.8L294.70 172.6L295.00 177.2L295.30 179.6L295.60 179.2L295.90 179.9L296.20 184.9L296.50 174.9L296.80 180.2L297.10 173.9L297.40 180.7L297.70 179.6L298.00 177.8L298.30 176.5L298.60 181.3L298.90 180.8L299.20 177.0L299.50 179.2L299.80 178.8L300.10 178.5L300.40 186.4L300.70 180.7L301.00 183.6L301.30 173.9L301.60 185.2L301.90 183.3L302.20 176.1L302.50 179.9L302.80 177.7L303.10 177.7L303.40 178.1L303.70 174.9L304.00 178.7L304.30 182.4L304.60 180.6L304.90 176.5L305.20 176.0L305.50 185.5L305.80 185.6L306.10 181.5L306.40 176.3L306.70 179.4L307.00 172.3L307.30 186.6L307.60 181.2L307.90 180.6L308.20 178.6L308.50 174.4L308.80 180.1L309.10 174.2L309.40 181.0L309.70 175.5L310.00 181.0L310.30 177.8L310.60 181.4L310.90 184.1L311.20 180.2L311.50 179.7L311.80 178.7L312.10 181.2L312.40 180.6L312.70 175.0L313.00 178.6L313.30 175.6L313.60 180.1L313.90 176.2L314.20 178.4L314.50 179.0L314.80 180.8L315.10 177.1L315.40 177.7L315.70 180.5L316.00 183.0L316.30 179.1L316.60 182.8L316.90 182.6L317.20 176.8L317.50 183.7L317.80 185.2L318.10 181.5L318.40 175.0L318.70 178.4L319.00 181.3L319.30 178.5L319.60 179.0L319.90 185.1L320.20 177.8L320.50 176.9L320.80 175.4L321.10 177.1L321.40 182.6L321.70 175.2L322.00 175.1L322.30 179.2L322.60 177.5L322.90 180.0L323.20 181.6L323.50 182.4L323.80 182.6L324.10 172.1L324.40 181.2L324.70 175.6L325.00 179.5L325.30 176.0L325.60 170.4L325.90 182.7L326.20 181.5L326.50 173.1L326.80 186.4L327.10 177.0L327.40 176.9L327.70 176.7L328.00 172.9L328.30 180.6L328.60 184.6L328.90 177.9L329.20 181.5L329.50 172.6L329.80 177.4L330.10 177.0L330.40 171.8L330.70 177.0L331.00 175.5L331.30 178.6L331.60 177.4L331.90 183.5L332.20 182.8L332.50 177.9L332.80 177.2L333.10 178.6L333.40 178.1L333.70 182.2L334.00 182.5L334.30 181.2L334.60 174.7L334.90 177.0L335.20 175.0L335.50 180.0L335.80 178.1L336.10 181.3L336.40 173.5L336.70 181.9L337.00 180.6L337.30 177.1L337.60 176.9L337.90 188.5L338.20 179.7L338.50 180.0L338.80 182.0L339.10 180.2L339.40 180.8L339.70 180.5L340.00 180.7L340.30 181.5L340.60 174.2L340.90 174.7L341.20 178.6L341.50 173.6L341.80 180.1L342.10 173.9L342.40 179.2L342.70 178.8L343.00 170.5L343.30 179.1L343.60 180.4L343.90 172.4L344.20 175.5L344.50 180.1L344.80 175.8L345.10 181.7L345.40 180.5L345.70 172.8L346.00 180.1L346.30 181.6L346.60 177.8L346.90 178.3L347.20 182.5L347.50 173.8L347.80 169.5L348.10 182.2L348.40 175.4L348.70 177.5L349.00 169.5L349.30 176.2L349.60 177.7L349.90 176.0L350.20 174.2L350.50 185.5L350.80 181.6L351.10 180.9L351.40 172.9L351.70 176.0L352.00 174.7L352.30 180.7L352.60 173.0L352.90 177.9L353.20 185.1L353.50 178.2L353.80 183.0L354.10 175.9L354.40 181.6L354.70 176.8L355.00 175.1L355.30 178.7M355.60 71.3L355.90 71.1L356.20 73.8L356.50 73.7L356.80 71.4L357.10 79.1L357.40 76.8L357.70 70.7L358.00 70.2L358.30 74.5L358.60 64.9L358.90 72.2L359.20 75.8L359.50 75.7L359.80 76.0L360.10 75.6L360.40 69.9L360.70 67.8L361.00 74.8L361.30 71.5L361.60 75.7L361.90 76.7L362.20 71.7L362.50 72.9L362.80 80.9L363.10 76.7L363.40 70.1L363.70 76.1L364.00 80.3L364.30 71.7L364.60 75.5L364.90 71.8L365.20 66.3L365.50 74.6L365.80 73.9L366.10 72.1L366.40 68.6L366.70 75.0L367.00 73.1L367.30 76.0L367.60 72.9L367.90 73.8L368.20 73.4L368.50 75.1L368.80 72.9L369.10 76.4L369.40 74.5L369.70 75.3L370.00 77.3L370.30 78.7L370.60 75.3L370.90 72.9L371.20 75.1L371.50 72.6L371.80 68.4L372.10 80.2L372.40 72.0L372.70 74.3L373.00 73.7L373.30 71.9L373.60 72.7L373.90 76.2L374.20 75.6L374.50 73.2L374.80 73.7L375.10 80.0L375.40 71.8L375.70 73.2L376.00 77.2L376.30 80.2L376.60 77.7L376.90 77.1L377.20 74.0L377.50 75.6L377.80 78.1L378.10 78.1L378.40 79.2L378.70 71.3L379.00 77.4L379.30 76.4L379.60 72.8L379.90 71.8L380.20 73.6L380.50 72.0L380.80 73.0L381.10 72.9L381.40 73.9L381.70 69.2L382.00 75.6L382.30 76.3L382.60 77.2L382.90 75.1L383.20 76.7L383.50 70.8L383.80 69.8L384.10 77.8L384.40 77.3L384.70 69.5L385.00 77.1L385.30 70.8L385.60 78.9L385.90 78.2L386.20 74.4L386.50 73.0L386.80 74.3L387.10 68.2L387.40 77.7L387.70 73.3L388.00 74.0L388.30 68.2L388.60 79.2L388.90 76.1L389.20 76.0L389.50 73.6L389.80 72.7L390.10 68.7L390.40 79.0L390.70 73.5L391.00 77.3L391.30 75.5L391.60 73.7L391.90 76.1L392.20 74.6L392.50 76.8L392.80 77.2L393.10 73.2L393.40 77.1L393.70 77.7L394.00 69.1L394.30 72.7L394.60 71.4L394.90 72.3L395.20 76.5L395.50 76.2L395.80 76.9L396.10 75.4L396.40 72.9L396.70 74.9L397.00 73.1L397.30 77.0L397.60 79.9L397.90 74.1L398.20 78.6L398.50 73.9L398.80 72.4L399.10 75.9L399.40 78.6L399.70 72.1L400.00 73.0L400.30 72.3L400.60 80.0L400.90 75.4L401.20 76.2L401.50 78.7L401.80 77.2L402.10 79.4L402.40 73.4L402.70 76.3L403.00 71.6L403.30 77.5L403.60 74.5L403.90 75.4L404.20 76.6L404.50 69.7L404.80 70.5L405.10 74.5L405.40 73.2L405.70 73.7L406.00 66.2L406.30 77.5L406.60 72.4L406.90 75.8L407.20 77.9L407.50 68.9L407.80 73.4L408.10 79.2L408.40 72.5L408.70 77.4L409.00 76.0L409.30 73.3L409.60 71.6L409.90 73.2L410.20 72.8L410.50 77.7L410.80 80.3L411.10 67.7L411.40 74.8L411.70 73.3L412.00 73.1L412.30 78.5L412.60 72.7L412.90 72.2L413.20 76.5L413.50 74.8L413.80 78.6L414.10 76.9L414.40 70.9L414.70 76.4L415.00 76.0L415.30 75.8L415.60 79.4L415.90 78.7L416.20 71.9L416.50 73.9L416.80 75.0L417.10 78.7L417.40 73.3L417.70 73.7L418.00 68.3L418.30 76.8L418.60 74.5L418.90 72.8L419.20 79.4L419.50 78.1L419.80 78.5L420.10 73.3L420.40 74.6L420.70 73.3L421.00 78.8L421.30 74.8L421.60 73.5L421.90 71.0L422.20 77.3L422.50 71.3L422.80 77.1L423.10 79.2L423.40 71.8L423.70 68.8L424.00 73.8L424.30 66.4L424.60 73.2L424.90 73.5L425.20 80.1L425.50 79.3L425.80 75.7L426.10 77.8L426.40 74.9L426.70 74.8L427.00 76.1L427.30 78.3L427.60 73.1L427.90 75.7L428.20 72.2L428.50 64.9L428.80 73.4L429.10 76.0L429.40 74.7L429.70 73.6L430.00 73.0L430.30 71.4L430.60 76.3L430.90 71.7L431.20 77.0L431.50 75.8L431.80 73.6L432.10 73.9L432.40 70.2L432.70 75.3L433.00 78.7L433.30 74.7L433.60 65.0L433.90 76.8L434.20 73.1L434.50 72.1L434.80 74.1L435.10 78.7L435.40 75.3L435.70 74.4L436.00 78.4L436.30 70.3L436.60 72.7L436.90 76.4L437.20 79.0L437.50 72.5L437.80 74.1L438.10 70.5L438.40 71.2L438.70 73.3L439.00 70.0L439.30 83.2L439.60 74.5L439.90 76.8L440.20 81.1L440.50 74.7L440.80 71.9L441.10 73.2L441.40 73.5L441.70 77.1L442.00 77.2L442.30 73.2L442.60 76.2L442.90 75.4L443.20 70.9L443.50 78.9L443.80 77.9L444.10 76.0L444.40 74.4M444.60 179.7L444.90 178.3L445.20 176.8L445.50 173.7L445.80 175.0L446.10 178.1L446.40 170.6L446.70 181.5L447.00 172.7L447.30 180.6L447.60 182.8L447.90 181.0L448.20 177.9L448.50 177.0L448.80 176.3L449.10 182.2L449.40 180.2L449.70 177.0L450.00 182.3L450.30 178.5L450.60 179.1L450.90 180.1L451.20 178.9L451.50 178.3L451.80 180.3L452.10 179.2L452.40 177.6L452.70 174.7L453.00 177.9L453.30 176.6L453.60 177.2L453.90 177.7L454.20 173.6L454.50 180.3L454.80 170.0L455.10 171.2L455.40 177.1L455.70 174.2L456.00 179.7L456.30 181.4L456.60 178.8L456.90 180.7L457.20 179.3L457.50 177.0L457.80 178.3L458.10 180.2L458.40 180.7L458.70 179.4L459.00 179.7L459.30 182.9L459.60 178.6L459.90 180.1L460.20 175.5L460.50 183.2L460.80 182.4L461.10 173.6L461.40 182.8L461.70 172.8L462.00 183.0L462.30 179.4L462.60 181.5L462.90 179.3L463.20 181.2L463.50 175.8L463.80 188.5L464.10 182.6L464.40 184.5L464.70 179.1L465.00 172.9L465.30 172.1L465.60 179.6L465.90 176.0L466.20 176.9L466.50 180.7L466.80 185.6L467.10 180.4L467.40 177.4L467.70 178.8L468.00 179.7L468.30 186.3L468.60 179.4L468.90 180.6L469.20 180.2L469.50 175.1L469.80 185.3L470.10 179.8L470.40 178.9L470.70 178.7L471.00 178.1L471.30 176.6L471.60 179.7L471.90 176.3L472.20 185.2L472.50 181.3L472.80 181.6L473.10 182.2L473.40 183.3L473.70 176.7L474.00 182.1L474.30 180.9L474.60 187.4L474.90 178.7L475.20 181.0L475.50 182.8L475.80 180.1L476.10 178.7L476.40 179.4L476.70 175.0L477.00 177.9L477.30 182.7L477.60 175.3L477.90 171.3L478.20 183.3L478.50 177.5L478.80 180.7L479.10 173.1L479.40 174.3L479.70 177.2L480.00 180.7L480.30 182.2L480.60 174.2L480.90 178.0L481.20 176.3L481.50 173.0L481.80 187.1L482.10 181.4L482.40 175.9L482.70 179.5L483.00 183.6L483.30 178.2L483.60 175.8L483.90 177.7L484.20 176.4L484.50 179.8L484.80 183.5L485.10 173.8L485.40 179.9L485.70 179.3L486.00 180.8L486.30 175.0L486.60 178.4L486.90 181.9L487.20 184.4L487.50 182.3L487.80 172.8L488.10 174.4L488.40 183.2L488.70 180.4L489.00 181.1L489.30 180.3L489.60 175.2L489.90 170.1L490.20 185.9L490.50 173.1L490.80 179.8L491.10 177.7L491.40 176.1L491.70 176.9L492.00 182.7L492.30 180.3L492.60 183.1L492.90 178.5L493.20 176.4L493.50 179.7L493.80 177.8L494.10 180.0L494.40 182.3L494.70 178.3L495.00 179.7L495.30 178.4L495.60 176.3L495.90 180.1L496.20 176.1L496.50 180.9L496.80 178.0L497.10 175.6L497.40 182.5L497.70 179.1L498.00 175.8L498.30 186.7L498.60 175.8L498.90 175.4L499.20 179.9L499.50 172.2L499.80 180.1L500.10 172.9L500.40 178.5L500.70 178.2L501.00 179.6L501.30 179.7L501.60 173.4L501.90 184.4L502.20 181.8L502.50 179.1L502.80 174.7L503.10 178.1L503.40 175.3L503.70 175.2L504.00 181.2L504.30 180.3L504.60 177.7L504.90 188.5L505.20 179.4L505.50 178.0L505.80 181.3L506.10 175.6L506.40 178.8L506.70 183.0L507.00 174.6L507.30 179.3L507.60 180.0L507.90 175.3L508.20 179.9L508.50 179.7L508.80 176.9L509.10 181.7L509.40 179.9L509.70 176.3L510.00 177.8L510.30 177.7L510.60 184.0L510.90 171.6L511.20 181.2L511.50 182.3L511.80 180.2L512.10 179.8L512.40 178.0L512.70 182.7L513.00 177.0L513.30 176.7L513.60 174.6L513.90 180.0L514.20 177.4L514.50 180.2L514.80 179.9L515.10 174.8L515.40 181.5L515.70 178.2L516.00 177.2L516.30 185.1L516.60 180.6L516.90 176.5L517.20 177.6L517.50 181.5L517.80 177.5L518.10 181.8L518.40 170.2L518.70 175.6L519.00 182.2L519.30 182.1L519.60 181.0L519.90 178.3L520.20 177.5L520.50 188.5L520.80 173.9L521.10 178.2L521.40 182.0L521.70 180.3L522.00 178.4L522.30 175.6L522.60 176.6L522.90 178.1L523.20 185.9L523.50 179.8L523.80 178.6L524.10 174.6L524.40 185.6L524.70 177.2L525.00 182.1L525.30 181.5L525.60 184.2L525.90 177.6L526.20 178.5L526.50 176.0L526.80 176.9L527.10 182.9L527.40 181.7L527.70 177.1L528.00 181.6L528.30 182.8L528.60 185.9L528.90 181.6L529.20 176.3L529.50 180.2L529.80 177.9L530.10 181.7L530.40 181.5L530.70 175.8L531.00 178.9L531.30 179.5L531.60 180.6L531.90 169.5M532.00 74.3L532.30 68.6L532.60 74.8L532.90 75.1L533.20 79.8L533.50 77.6L533.80 75.0L534.10 75.5L534.40 73.5L534.70 69.6L535.00 71.1L535.30 74.5L535.60 78.9L535.90 70.7L536.20 71.0L536.50 75.8L536.80 68.6L537.10 77.6L537.40 73.2L537.70 74.6L538.00 79.8L538.30 73.4L538.60 75.9L538.90 70.0L539.20 82.3L539.50 70.6L539.80 74.9L540.10 74.4L540.40 69.7L540.70 77.7L541.00 69.6L541.30 73.3L541.60 76.0L541.90 74.4L542.20 72.6L542.50 78.9L542.80 71.3L543.10 71.4L543.40 72.5L543.70 76.3L544.00 72.4L544.30 75.9L544.60 73.9L544.90 74.3L545.20 80.7L545.50 72.1L545.80 75.0L546.10 72.3L546.40 69.6L546.70 75.8L547.00 69.6L547.30 73.2L547.60 75.2L547.90 72.0L548.20 78.2L548.50 80.9L548.80 74.5L549.10 75.7L549.40 71.2L549.70 73.2L550.00 76.4L550.30 72.4L550.60 72.5L550.90 73.3L551.20 71.0L551.50 78.0L551.80 77.8L552.10 75.5L552.40 76.8L552.70 75.5L553.00 81.2L553.30 71.3L553.60 76.8L553.90 76.5L554.20 74.2L554.50 74.3L554.80 74.4L555.10 68.6L555.40 76.1L555.70 77.8L556.00 76.9L556.30 69.0L556.60 79.7L556.90 78.5L557.20 76.5L557.50 71.3L557.80 78.1L558.10 69.5L558.40 73.7L558.70 68.5L559.00 81.2L559.30 72.7L559.60 70.5L559.90 78.5L560.20 71.0L560.50 73.6L560.80 76.0L561.10 77.1L561.40 77.9L561.70 70.1L562.00 77.8L562.30 74.6L562.60 71.7L562.90 79.1L563.20 73.7L563.50 68.2L563.80 80.2L564.10 74.1L564.40 76.3L564.70 75.2L565.00 71.5L565.30 75.8L565.60 73.0L565.90 74.0L566.20 75.4L566.50 82.7L566.80 72.7L567.10 76.5L567.40 73.6L567.70 76.4L568.00 76.0L568.30 76.9L568.60 73.8L568.90 68.4L569.20 76.3L569.50 73.6L569.80 76.1L570.10 69.8L570.40 72.6L570.70 69.6L571.00 80.0L571.30 72.7L571.60 72.5L571.90 76.4L572.20 70.6L572.50 74.2L572.80 76.9L573.10 74.5L573.40 69.4L573.70 76.6L574.00 76.2L574.30 71.0L574.60 70.6L574.90 79.5L575.20 72.4L575.50 75.5L575.80 71.5L576.10 70.5L576.40 73.6L576.70 76.4L577.00 76.6L577.30 68.0L577.60 74.3L577.90 70.9L578.20 76.9L578.50 75.9L578.80 68.3L579.10 74.5L579.40 70.5L579.70 74.1L580.00 68.3L580.30 77.9L580.60 78.2L580.90 74.2L581.20 75.6L581.50 74.1L581.80 76.7L582.10 70.4L582.40 66.4L582.70 74.0L583.00 73.2L583.30 79.0L583.60 74.5L583.90 77.7L584.20 75.7L584.50 80.4L584.80 75.9L585.10 72.3L585.40 72.2L585.70 75.6L586.00 80.1L586.30 75.9L586.60 70.6L586.90 78.2L587.20 75.1L587.50 70.8L587.80 70.5L588.10 70.0L588.40 74.1L588.70 80.4L589.00 74.2L589.30 75.7L589.60 74.3L589.90 69.6L590.20 75.8L590.50 73.2L590.80 76.2L591.10 76.2L591.40 79.5L591.70 76.1L592.00 79.3L592.30 69.6L592.60 72.5L592.90 81.4L593.20 72.0L593.50 77.9L593.80 75.3L594.10 73.6L594.40 69.8L594.70 76.8L595.00 78.4L595.30 76.4L595.60 75.0L595.90 75.6L596.20 71.0L596.50 77.6L596.80 79.1L597.10 79.4L597.40 71.3L597.70 75.5L598.00 75.5L598.30 75.5L598.60 76.8L598.90 72.4L599.20 66.7L599.50 74.0L599.80 71.2L600.10 74.8L600.40 74.8L600.70 74.1L601.00 74.7L601.30 73.4L601.60 74.6L601.90 77.0L602.20 75.7L602.50 69.7L602.80 74.9L603.10 77.1L603.40 72.6L603.70 75.9L604.00 76.0L604.30 71.0L604.60 70.5L604.90 74.2L605.20 73.3L605.50 72.0L605.80 69.8L606.10 73.1L606.40 70.9L606.70 73.4L607.00 73.7L607.30 74.8L607.60 77.7L607.90 70.8L608.20 70.4L608.50 80.3L608.80 73.5L609.10 74.9L609.40 82.0L609.70 78.7L610.00 72.4L610.30 74.8L610.60 74.9L610.90 79.5L611.20 73.5L611.50 76.5L611.80 77.8L612.10 83.9L612.40 69.7L612.70 68.6L613.00 72.3L613.30 69.5L613.60 71.1L613.90 71.8L614.20 73.1L614.50 74.4L614.80 73.7L615.10 72.8L615.40 74.8L615.70 73.0L616.00 75.1L616.30 73.5L616.60 75.6L616.90 75.3L617.20 73.2L617.50 74.5L617.80 72.5L618.10 74.4L618.40 74.0L618.70 72.8L619.00 70.2L619.30 70.6L619.60 76.9L619.90 73.8L620.20 68.5L620.50 74.2L620.80 73.6L621.10 68.3L621.40 77.3L621.70 69.6L622.00 76.2L622.30 72.7L622.60 76.8L622.90 79.2L623.20 73.8L623.50 79.9L623.80 65.3L624.10 74.4L624.40 77.8L624.70 80.0L625.00 69.5L625.30 75.5L625.60 67.6L625.90 79.3L626.20 78.2M626.20 176.2L626.50 182.0L626.80 174.3L627.10 178.1L627.40 172.9L627.70 183.0L628.00 180.9L628.30 180.2L628.60 181.6L628.90 179.2L629.20 180.6L629.50 182.2L629.80 178.9L630.10 173.5L630.40 184.0L630.70 179.9L631.00 183.6L631.30 177.9L631.60 174.8L631.90 176.1L632.20 179.5L632.50 179.2L632.80 181.9L633.10 181.5L633.40 178.2L633.70 184.6L634.00 177.9L634.30 182.2L634.60 178.8L634.90 177.5L635.20 179.4L635.50 178.3L635.80 182.6L636.10 174.3L636.40 181.1L636.70 179.1L637.00 176.6L637.30 175.3L637.60 179.9L637.90 180.2L638.20 176.5L638.50 175.5L638.80 185.4L639.10 179.6L639.40 175.5L639.70 183.0L640.00 179.0L640.30 182.2L640.60 179.1L640.90 184.9L641.20 179.2L641.50 176.7L641.80 176.7L642.10 181.1L642.40 179.7L642.70 178.2L643.00 179.1L643.30 179.8L643.60 174.0L643.90 180.3L644.20 177.0L644.50 179.3L644.80 179.9L645.10 179.8L645.40 182.9L645.70 177.4L646.00 178.8L646.30 174.8L646.60 180.0L646.90 177.8L647.20 179.1L647.50 181.0L647.80 181.2L648.10 180.3L648.40 178.8L648.70 177.7L649.00 180.3L649.30 183.7L649.60 182.8L649.90 178.4L650.20 175.1L650.50 175.7L650.80 178.8L651.10 174.9L651.40 175.2L651.70 176.1L652.00 184.1L652.30 177.2L652.60 180.7L652.90 177.8L653.20 180.1L653.50 178.2L653.80 177.3L654.10 179.7L654.40 172.2L654.70 175.1L655.00 187.0L655.30 179.6L655.60 171.0L655.90 178.4L656.20 177.3L656.50 177.4L656.80 182.6L657.10 179.0L657.40 177.5L657.70 182.0L658.00 182.2L658.30 179.5L658.60 183.5L658.90 179.0L659.20 174.2L659.50 177.0L659.80 185.1L660.10 184.8L660.40 174.7L660.70 178.4L661.00 179.2L661.30 181.0L661.60 173.2L661.90 182.7L662.20 181.5L662.50 178.3L662.80 185.9L663.10 183.0L663.40 178.3L663.70 181.6L664.00 175.4L664.30 180.9L664.60 176.7L664.90 175.7L665.20 176.6L665.50 175.3L665.80 181.1L666.10 178.5L666.40 177.1L666.70 178.1L667.00 179.3L667.30 182.1L667.60 183.9L667.90 181.4L668.20 174.3L668.50 173.8L668.80 176.7L669.10 174.3L669.40 184.6L669.70 177.5L670.00 181.2L670.30 178.4L670.60 180.9L670.90 177.6L671.20 176.1L671.50 174.2L671.80 179.6L672.10 181.5L672.40 176.1L672.70 180.9L673.00 183.0L673.30 177.5L673.60 177.1L673.90 180.3L674.20 178.1L674.50 177.3L674.80 179.7L675.10 172.8L675.40 176.6L675.70 170.7L676.00 178.2L676.30 181.4L676.60 182.9L676.90 173.5L677.20 183.1L677.50 179.4L677.80 179.3L678.10 179.1L678.40 181.4L678.70 179.1L679.00 179.6L679.30 178.9L679.60 180.8L679.90 178.6L680.20 177.5L680.50 182.1L680.80 180.3" stroke="#ffff00" stroke-width="0.8" fill="none" stroke-linejoin="bevel" opacity="1.0"/>
<path d="M43.5 248.6V344.2M129.5 248.6V344.2M215.5 248.6V344.2M304.5 248.6V344.2M398.5 248.6V344.2M486.5 248.6V344.2M576.5 248.6V344.2M666.5 248.6V344.2" stroke="#003c3c" stroke-width="1" fill="none"/>
<linearGradient id="g00ebeb" x1="0" y1="0" x2="0" y2="1"><stop offset="0" stop-color="#00ebeb" stop-opacity="0"/><stop offset="0.3" stop-color="#00ebeb" stop-opacity="0.6"/><stop offset="0.7" stop-color="#00ebeb" stop-opacity="0.6"/><stop offset="1" stop-color="#00ebeb" stop-opacity="0"/></linearGradient>
<rect x="30.0" y="342.7" width="13.2" height="11" fill="url(#g00ebeb)"/>
<rect x="43.2" y="239.1" width="86.4" height="11" fill="url(#g00ebeb)"/>
<rect x="129.6" y="342.7" width="85.7" height="11" fill="url(#g00ebeb)"/>
<rect x="215.3" y="239.1" width="88.9" height="11" fill="url(#g00ebeb)"/>
<rect x="304.2" y="342.7" width="94.7" height="11" fill="url(#g00ebeb)"/>
<rect x="398.9" y="239.1" width="87.1" height="11" fill="url(#g00ebeb)"/>
<rect x="486.0" y="342.7" width="90.0" height="11" fill="url(#g00ebeb)"/>
<rect x="576.0" y="239.1" width="90.0" height="11" fill="url(#g00ebeb)"/>
<rect x="666.0" y="342.7" width="15.0" height="11" fill="url(#g00ebeb)"/>
<path d="M30.00 348.7L30.30 344.6L30.60 344.6L30.90 347.8L31.20 345.2L31.50 352.0L31.80 346.4L32.10 347.1L32.40 345.2L32.70 349.9L33.00 342.5L33.30 350.1L33.60 353.0L33.90 348.4L34.20 349.7L34.50 349.6L34.80 349.8L35.10 346.6L35.40 346.4L35.70 343.0L36.00 347.1L36.30 348.7L36.60 350.9L36.90 342.9L37.20 343.5L37.50 346.9L37.80 346.0L38.10 349.0L38.40 342.1L38.70 349.0L39.00 345.5L39.30 352.4L39.60 349.7L39.90 346.3L40.20 348.0L40.50 346.1L40.80 348.7L41.10 345.1L41.40 347.8L41.70 348.4L42.00 346.7L42.30 345.7L42.60 348.5L42.90 346.6L43.20 351.6M43.20 242.1L43.50 247.2L43.80 243.5L44.10 243.5L44.40 244.4L44.70 245.5L45.00 247.1L45.30 247.3L45.60 249.6L45.90 246.9L46.20 247.4L46.50 246.3L46.80 247.2L47.10 245.5L47.40 245.6L47.70 245.4L48.00 245.6L48.30 242.9L48.60 241.9L48.90 245.9L49.20 246.2L49.50 244.3L49.80 250.2L50.10 240.1L50.40 242.4L50.70 242.9L51.00 244.4L51.30 242.9L51.60 249.3L51.90 248.4L52.20 244.5L52.50 248.3L52.80 246.4L53.10 242.3L53.40 243.4L53.70 246.4L54.00 249.4L54.30 241.3L54.60 239.1L54.90 240.2L55.20 248.1L55.50 239.6L55.80 242.4L56.10 246.8L56.40 245.6L56.70 251.8L57.00 248.8L57.30 241.0L57.60 248.0L57.90 235.1L58.20 245.6L58.50 242.3L58.80 245.5L59.10 243.1L59.40 245.9L59.70 241.9L60.00 245.9L60.30 243.4L60.60 242.5L60.90 240.3L61.20 241.1L61.50 243.5L61.80 245.9L62.10 238.1L62.40 244.6L62.70 247.2L63.00 245.3L63.30 242.3L63.60 244.5L63.90 242.4L64.20 247.2L64.50 236.8L64.80 247.5L65.10 242.3L65.40 242.1L65.70 250.8L66.00 239.3L66.30 241.4L66.60 238.7L66.90 248.0L67.20 242.6L67.50 247.0L67.80 249.8L68.10 249.8L68.40 239.8L68.70 246.8L69.00 238.6L69.30 243.7L69.60 245.5L69.90 250.0L70.20 252.3L70.50 237.7L70.80 242.7L71.10 237.2L71.40 242.0L71.70 249.3L72.00 239.7L72.30 244.6L72.60 248.8L72.90 244.6L73.20 248.1L73.50 242.4L73.80 239.8L74.10 254.1L74.40 237.5L74.70 244.5L75.00 237.0L75.30 244.1L75.60 240.6L75.90 240.2L76.20 244.4L76.50 247.2L76.80 242.2L77.10 244.9L77.40 243.5L77.70 239.2L78.00 242.6L78.30 244.4L78.60 245.9L78.90 248.8L79.20 243.4L79.50 239.6L79.80 245.6L80.10 244.1L80.40 245.7L80.70 245.2L81.00 246.9L81.30 247.5L81.60 241.7L81.90 249.4L82.20 246.4L82.50 247.5L82.80 245.8L83.10 246.6L83.40 243.0L83.70 248.2L84.00 236.4L84.30 247.9L84.60 242.4L84.90 245.0L85.20 245.2L85.50 245.7L85.80 242.1L86.10 246.4L86.40 243.4L86.70 241.5L87.00 244.3L87.30 244.4L87.60 241.8L87.90 248.3L88.20 242.1L88.50 245.7L88.80 243.8L89.10 236.6L89.40 248.1L89.70 239.9L90.00 240.3L90.30 251.3L90.60 245.3L90.90 246.1L91.20 247.5L91.50 245.1L91.80 240.0L92.10 249.9L92.40 248.9L92.70 242.6L93.00 241.2L93.30 247.5L93.60 242.4L93.90 247.0L94.20 242.0L94.50 244.0L94.80 249.2L95.10 248.9L95.40 250.2L95.70 246.8L96.00 247.0L96.30 245.5L96.60 251.4L96.90 240.3L97.20 251.0L97.50 248.6L97.80 244.5L98.10 238.1L98.40 248.5L98.70 240.6L99.00 245.7L99.30 245.1L99.60 243.4L99.90 240.1L100.20 246.5L100.50 248.7L100.80 238.7L101.10 251.6L101.40 244.6L101.70 247.0L102.00 244.0L102.30 242.6L102.60 241.4L102.90 248.9L103.20 244.2L103.50 243.8L103.80 241.4L104.10 242.9L104.40 242.9L104.70 247.4L105.00 248.2L105.30 242.4L105.60 238.2L105.90 248.0L106.20 246.1L106.50 240.7L106.80 240.4L107.10 247.1L107.40 237.6L107.70 249.1L108.00 242.4L108.30 242.7L108.60 249.4L108.90 241.3L109.20 249.6L109.50 244.3L109.80 244.3L110.10 249.1L110.40 242.0L110.70 244.8L111.00 249.6L111.30 242.2L111.60 238.2L111.90 241.4L112.20 245.9L112.50 244.0L112.80 244.3L113.10 246.2L113.40 244.2L113.70 242.1L114.00 247.7L114.30 246.8L114.60 243.1L114.90 242.4L115.20 254.1L115.50 240.5L115.80 246.6L116.10 239.4L116.40 238.0L116.70 249.3L117.00 244.6L117.30 242.8L117.60 248.7L117.90 244.3L118.20 242.5L118.50 242.2L118.80 248.3L119.10 245.4L119.40 245.3L119.70 244.1L120.00 243.6L120.30 239.4L120.60 245.3L120.90 246.2L121.20 246.1L121.50 248.2L121.80 248.0L122.10 243.0L122.40 246.6L122.70 243.4L123.00 250.2L123.30 243.6L123.60 246.8L123.90 241.8L124.20 246.3L124.50 239.9L124.80 238.6L125.10 246.0L125.40 247.3L125.70 248.8L126.00 245.5L126.30 246.2L126.60 244.2L126.90 247.7L127.20 242.9L127.50 243.6L127.80 253.6L128.10 242.3L128.40 247.8L128.70 243.9L129.00 246.8L129.30 245.0L129.60 241.7M129.60 345.1L129.90 343.0L130.20 354.3L130.50 351.4L130.80 344.5L131.10 345.5L131.40 356.5L131.70 348.6L132.00 348.4L132.30 346.5L132.60 348.1L132.90 345.2L133.20 341.3L133.50 348.2L133.80 348.0L134.10 351.0L134.40 347.3L134.70 342.1L135.00 351.8L135.30 350.4L135.60 348.4L135.90 354.3L136.20 352.8L136.50 345.3L136.80 347.9L137.10 347.8L137.40 347.0L137.70 352.4L138.00 351.7L138.30 345.0L138.60 351.9L138.90 352.8L139.20 348.0L139.50 347.6L139.80 344.1L140.10 348.1L140.40 350.0L140.70 343.2L141.00 345.1L141.30 344.4L141.60 346.3L141.90 349.3L142.20 348.3L142.50 348.3L142.80 345.7L143.10 351.3L143.40 350.3L143.70 348.4L144.00 345.9L144.30 344.5L144.60 349.3L144.90 348.7L145.20 349.3L145.50 352.2L145.80 350.7L146.10 340.5L146.40 347.6L146.70 347.2L147.00 350.9L147.30 346.4L147.60 349.1L147.90 350.9L148.20 344.3L148.50 351.9L148.80 349.6L149.10 348.0L149.40 343.0L149.70 346.5L150.00 345.1L150.30 348.4L150.60 348.0L150.90 348.7L151.20 349.5L151.50 346.9L151.80 350.4L152.10 344.1L152.40 351.1L152.70 351.9L153.00 350.0L153.30 351.4L153.60 350.5L153.90 346.3L154.20 344.8L154.50 353.7L154.80 345.8L155.10 346.5L155.40 348.4L155.70 340.2L156.00 343.9L156.30 348.7L156.60 346.7L156.90 343.6L157.20 345.6L157.50 344.7L157.80 352.1L158.10 347.9L158.40 348.3L158.70 351.3L159.00 344.7L159.30 347.9L159.60 346.6L159.90 349.2L160.20 348.2L160.50 351.1L160.80 348.1L161.10 351.1L161.40 344.9L161.70 352.2L162.00 346.8L162.30 345.2L162.60 348.5L162.90 346.2L163.20 347.0L163.50 344.8L163.80 348.1L164.10 345.6L164.40 347.7L164.70 349.0L165.00 344.3L165.30 345.0L165.60 348.0L165.90 346.6L166.20 342.3L166.50 349.0L166.80 351.7L167.10 344.7L167.40 352.5L167.70 348.8L168.00 354.0L168.30 344.8L168.60 344.4L168.90 347.7L169.20 348.9L169.50 344.1L169.80 340.7L170.10 347.4L170.40 349.6L170.70 345.0L171.00 348.4L171.30 346.5L171.60 341.4L171.90 345.0L172.20 349.5L172.50 349.0L172.80 350.0L173.10 350.0L173.40 345.8L173.70 346.3L174.00 349.2L174.30 353.4L174.60 353.1L174.90 344.6L175.20 346.8L175.50 347.8L175.80 348.5L176.10 345.7L176.40 352.5L176.70 353.1L177.00 348.8L177.30 350.2L177.60 354.4L177.90 344.5L178.20 346.0L178.50 346.0L178.80 352.4L179.10 349.8L179.40 349.8L179.70 343.6L180.00 353.6L180.30 348.6L180.60 354.7L180.90 347.5L181.20 348.8L181.50 347.5L181.80 353.9L182.10 351.2L182.40 349.3L182.70 349.3L183.00 342.0L183.30 348.7L183.60 346.7L183.90 338.7L184.20 352.0L184.50 348.3L184.80 348.4L185.10 345.8L185.40 350.8L185.70 347.0L186.00 344.4L186.30 344.4L186.60 347.9L186.90 349.9L187.20 354.7L187.50 345.0L187.80 345.4L188.10 351.2L188.40 347.3L188.70 345.3L189.00 347.6L189.30 346.4L189.60 351.1L189.90 346.6L190.20 349.3L190.50 345.0L190.80 349.3L191.10 342.2L191.40 349.9L191.70 350.5L192.00 348.6L192.30 346.5L192.60 344.7L192.90 350.4L193.20 352.4L193.50 347.1L193.80 346.8L194.10 345.3L194.40 348.0L194.70 343.7L195.00 348.7L195.30 346.4L195.60 344.5L195.90 346.1L196.20 347.2L196.50 343.2L196.80 346.0L197.10 354.2L197.40 347.0L197.70 347.5L198.00 347.6L198.30 347.8L198.60 345.6L198.90 351.4L199.20 344.7L199.50 342.4L199.80 350.5L200.10 349.6L200.40 346.5L200.70 351.1L201.00 348.7L201.30 347.0L201.60 347.0L201.90 346.9L202.20 355.5L202.50 351.7L202.80 348.0L203.10 353.6L203.40 345.5L203.70 354.5L204.00 352.3L204.30 349.4L204.60 346.8L204.90 349.0L205.20 344.7L205.50 347.1L205.80 353.6L206.10 347.1L206.40 345.1L206.70 351.2L207.00 347.3L207.30 353.6L207.60 349.1L207.90 346.8L208.20 350.0L208.50 346.4L208.80 345.4L209.10 351.5L209.40 346.4L209.70 349.9L210.00 353.2L210.30 350.4L210.60 349.7L210.90 345.1L211.20 351.2L211.50 354.1L211.80 348.3L212.10 344.0L212.40 346.8L212.70 348.7L213.00 345.5L213.30 345.6L213.60 342.7L213.90 350.2L214.20 347.6L214.50 346.3L214.80 348.1L215.10 346.8M215.30 245.8L215.60 246.0L215.90 248.1L216.20 235.1L216.50 244.5L216.80 244.9L217.10 245.5L217.40 242.4L217.70 244.1L218.00 244.3L218.30 242.2L218.60 242.0L218.90 247.3L219.20 243.9L219.50 242.8L219.80 249.7L220.10 248.3L220.40 244.6L220.70 246.0L221.00 242.1L221.30 244.8L221.60 240.6L221.90 248.8L222.20 244.7L222.50 245.0L222.80 242.7L223.10 239.2L223.40 250.0L223.70 245.9L224.00 242.4L224.30 246.4L224.60 241.1L224.90 244.3L225.20 246.4L225.50 241.3L225.80 247.2L226.10 242.5L226.40 240.4L226.70 245.6L227.00 245.5L227.30 243.6L227.60 245.1L227.90 244.5L228.20 246.7L228.50 241.5L228.80 243.4L229.10 239.4L229.40 240.1L229.70 240.6L230.00 242.6L230.30 248.6L230.60 243.3L230.90 242.2L231.20 238.9L231.50 242.9L231.80 254.1L232.10 247.8L232.40 243.2L232.70 246.1L233.00 243.1L233.30 245.5L233.60 247.8L233.90 243.9L234.20 247.5L234.50 244.0L234.80 240.3L235.10 248.0L235.40 248.1L235.70 245.5L236.00 239.4L236.30 246.6L236.60 241.2L236.90 244.2L237.20 244.9L237.50 248.8L237.80 237.7L238.10 247.1L238.40 244.3L238.70 243.4L239.00 241.8L239.30 249.6L239.60 249.0L239.90 247.3L240.20 244.8L240.50 245.9L240.80 242.8L241.10 244.4L241.40 244.6L241.70 247.1L242.00 244.5L242.30 243.1L242.60 239.2L242.90 240.8L243.20 243.1L243.50 240.5L243.80 242.5L244.10 244.6L244.40 242.2L244.70 243.2L245.00 249.7L245.30 247.6L245.60 247.6L245.90 247.2L246.20 242.2L246.50 247.0L246.80 251.5L247.10 243.8L247.40 244.3L247.70 250.6L248.00 249.4L248.30 244.5L248.60 250.4L248.90 247.8L249.20 243.0L249.50 243.2L249.80 248.6L250.10 247.4L250.40 241.6L250.70 240.5L251.00 247.8L251.30 243.8L251.60 242.8L251.90 239.5L252.20 241.0L252.50 242.9L252.80 250.2L253.10 243.3L253.40 245.9L253.70 242.5L254.00 250.4L254.30 242.2L254.60 245.5L254.90 241.0L255.20 246.5L255.50 238.5L255.80 245.5L256.10 246.3L256.40 243.8L256.70 245.9L257.00 245.7L257.30 250.9L257.60 243.8L257.90 248.8L258.20 239.6L258.50 245.9L258.80 244.5L259.10 244.7L259.40 244.6L259.70 245.3L260.00 241.2L260.30 242.7L260.60 247.7L260.90 244.0L261.20 252.3L261.50 249.1L261.80 246.5L262.10 239.9L262.40 246.9L262.70 248.0L263.00 246.5L263.30 249.4L263.60 241.5L263.90 241.4L264.20 241.9L264.50 243.4L264.80 247.0L265.10 246.4L265.40 241.6L265.70 240.7L266.00 241.1L266.30 245.8L266.60 248.1L266.90 247.5L267.20 241.8L267.50 238.2L267.80 241.6L268.10 244.7L268.40 239.1L268.70 246.6L269.00 246.6L269.30 244.2L269.60 248.4L269.90 245.0L270.20 239.1L270.50 247.9L270.80 244.8L271.10 247.4L271.40 242.2L271.70 241.5L272.00 246.8L272.30 244.5L272.60 245.5L272.90 245.2L273.20 241.8L273.50 236.5L273.80 244.1L274.10 244.3L274.40 243.7L274.70 243.8L275.00 241.2L275.30 244.8L275.60 246.0L275.90 240.4L276.20 251.3L276.50 237.6L276.80 248.1L277.10 241.2L277.40 247.8L277.70 238.4L278.00 242.6L278.30 246.5L278.60 242.6L278.90 248.2L279.20 248.2L279.50 240.9L279.80 240.5L280.10 245.6L280.40 241.9L280.70 242.0L281.00 240.8L281.30 236.9L281.60 245.4L281.90 243.8L282.20 241.1L282.50 239.8L282.80 245.4L283.10 249.7L283.40 242.6L283.70 248.5L284.00 247.0L284.30 243.9L284.60 241.2L284.90 249.5L285.20 246.6L285.50 237.0L285.80 236.9L286.10 244.9L286.40 241.3L286.70 247.1L287.00 243.7L287.30 246.3L287.60 243.3L287.90 240.5L288.20 242.8L288.50 244.5L288.80 246.2L289.10 252.2L289.40 251.2L289.70 244.6L290.00 245.2L290.30 238.9L290.60 247.5L290.90 244.3L291.20 242.7L291.50 249.2L291.80 242.2L292.10 243.5L292.40 248.9L292.70 249.5L293.00 243.0L293.30 239.9L293.60 244.9L293.90 241.8L294.20 245.1L294.50 240.9L294.80 247.0L295.10 246.5L295.40 249.5L295.70 247.1L296.00 246.8L296.30 245.8L296.60 241.6L296.90 246.5L297.20 244.9L297.50 250.4L297.80 239.6L298.10 243.6L298.40 243.9L298.70 247.2L299.00 243.4L299.30 247.0L299.60 241.4L299.90 245.0L300.20 240.5L300.50 245.9L300.80 244.5L301.10 246.1L301.40 246.5L301.70 247.5L302.00 239.9L302.30 248.9L302.60 248.0L302.90 247.9L303.20 243.1L303.50 242.2L303.80 241.1L304.10 245.8M304.20 351.6L304.50 346.5L304.80 352.4L305.10 346.0L305.40 348.9L305.70 348.2L306.00 343.8L306.30 352.6L306.60 344.9L306.90 348.9L307.20 348.0L307.50 346.8L307.80 345.8L308.10 350.6L308.40 352.6L308.70 346.6L309.00 351.8L309.30 349.9L309.60 351.6L309.90 347.8L310.20 351.9L310.50 355.1L310.80 346.0L311.10 349.3L311.40 339.5L311.70 351.2L312.00 350.0L312.30 348.8L312.60 350.1L312.90 346.6L313.20 344.2L313.50 347.2L313.80 345.7L314.10 343.8L314.40 349.4L314.70 345.7L315.00 346.9L315.30 346.3L315.60 353.5L315.90 349.3L316.20 345.9L316.50 349.0L316.80 349.7L317.10 344.9L317.40 349.8L317.70 344.0L318.00 346.2L318.30 347.4L318.60 343.6L318.90 347.2L319.20 349.5L319.50 354.5L319.80 352.1L320.10 344.0L320.40 348.8L320.70 353.3L321.00 344.9L321.30 352.7L321.60 351.4L321.90 347.7L322.20 348.8L322.50 347.6L322.80 348.6L323.10 345.4L323.40 342.9L323.70 346.5L324.00 348.5L324.30 344.3L324.60 347.9L324.90 353.1L325.20 343.2L325.50 350.1L325.80 343.9L326.10 347.2L326.40 347.1L326.70 351.0L327.00 347.6L327.30 343.9L327.60 352.3L327.90 351.9L328.20 348.2L328.50 352.2L328.80 350.7L329.10 347.2L329.40 345.9L329.70 347.3L330.00 351.1L330.30 348.4L330.60 338.7L330.90 351.2L331.20 348.0L331.50 348.7L331.80 348.6L332.10 349.8L332.40 349.3L332.70 350.5L333.00 346.8L333.30 352.0L333.60 344.1L333.90 354.3L334.20 345.3L334.50 348.7L334.80 347.0L335.10 347.3L335.40 353.2L335.70 349.3L336.00 349.7L336.30 345.6L336.60 349.8L336.90 352.5L337.20 350.2L337.50 353.0L337.80 349.6L338.10 349.5L338.40 348.6L338.70 346.8L339.00 349.8L339.30 349.9L339.60 350.9L339.90 347.0L340.20 343.4L340.50 355.3L340.80 340.7L341.10 346.0L341.40 349.0L341.70 342.8L342.00 349.7L342.30 347.8L342.60 346.1L342.90 352.8L343.20 355.6L343.50 350.3L343.80 342.3L344.10 349.3L344.40 352.0L344.70 348.8L345.00 346.7L345.30 345.1L345.60 349.5L345.90 347.8L346.20 347.7L346.50 347.8L346.80 343.2L347.10 342.4L347.40 350.5L347.70 347.0L348.00 353.6L348.30 348.0L348.60 352.1L348.90 345.3L349.20 338.7L349.50 352.3L349.80 357.7L350.10 352.2L350.40 351.1L350.70 343.7L351.00 344.4L351.30 348.4L351.60 348.8L351.90 346.5L352.20 348.0L352.50 350.6L352.80 341.9L353.10 345.3L353.40 352.1L353.70 348.0L354.00 347.5L354.30 349.8L354.60 351.5L354.90 346.4L355.20 347.5L355.50 342.7L355.80 349.3L356.10 352.2L356.40 349.7L356.70 350.8L357.00 349.8L357.30 348.0L357.60 347.3L357.90 342.8L358.20 344.0L358.50 347.8L358.80 345.8L359.10 344.5L359.40 346.6L359.70 347.4L360.00 344.3L360.30 349.9L360.60 345.4L360.90 349.6L361.20 353.4L361.50 348.8L361.80 345.6L362.10 345.3L362.40 353.7L362.70 342.6L363.00 347.7L363.30 349.2L363.60 348.3L363.90 350.7L364.20 345.0L364.50 348.8L364.80 352.5L365.10 343.3L365.40 353.4L365.70 347.7L366.00 353.2L366.30 350.2L366.60 346.3L366.90 345.0L367.20 347.1L367.50 347.2L367.80 348.2L368.10 355.8L368.40 348.6L368.70 351.2L369.00 342.6L369.30 350.4L369.60 344.3L369.90 355.1L370.20 346.9L370.50 347.2L370.80 346.2L371.10 345.9L371.40 346.3L371.70 347.5L372.00 351.4L372.30 345.9L372.60 347.3L372.90 353.9L373.20 341.5L373.50 350.9L373.80 349.7L374.10 349.9L374.40 348.4L374.70 344.8L375.00 349.3L375.30 341.2L375.60 348.2L375.90 357.3L376.20 346.3L376.50 350.0L376.80 345.0L377.10 352.1L377.40 348.8L377.70 350.2L378.00 348.0L378.30 348.1L378.60 350.5L378.90 349.3L379.20 345.4L379.50 347.3L379.80 347.6L380.10 351.2L380.40 346.0L380.70 341.7L381.00 350.1L381.30 348.7L381.60 350.1L381.90 344.3L382.20 353.7L382.50 347.6L382.80 350.7L383.10 347.9L383.40 346.4L383.70 345.7L384.00 350.0L384.30 349.5L384.60 345.1L384.90 344.3L385.20 356.4L385.50 353.1L385.80 347.0L386.10 349.9L386.40 348.2L386.70 350.2L387.00 346.1L387.30 348.1L387.60 349.3L387.90 350.4L388.20 343.2L388.50 346.4L388.80 357.7L389.10 349.8L389.40 351.0L389.70 351.7L390.00 346.4L390.30 354.4L390.60 345.9L390.90 342.8L391.20 346.6L391.50 345.8L391.80 346.8L392.10 349.2L392.40 345.0L392.70 347.1L393.00 344.5L393.30 354.9L393.60 348.6L393.90 344.1L394.20 350.1L394.50 349.9L394.80 346.7L395.10 351.2L395.40 346.6L395.70 342.5L396.00 347.4L396.30 349.9L396.60 346.1L396.90 350.4L397.20 342.3L397.50 349.7L397.80 342.8L398.10 347.7L398.40 347.0L398.70 345.1M398.90 241.7L399.20 243.5L399.50 245.5L399.80 241.9L400.10 245.5L400.40 244.4L400.70 240.7L401.00 243.2L401.30 250.9L401.60 248.6L401.90 242.4L402.20 240.4L402.50 246.3L402.80 244.1L403.10 244.9L403.40 242.7L403.70 246.8L404.00 248.0L404.30 241.6L404.60 246.9L404.90 245.6L405.20 239.7L405.50 238.7L405.80 245.1L406.10 243.2L406.40 241.3L406.70 235.1L407.00 243.1L407.30 243.7L407.60 240.9L407.90 241.9L408.20 249.0L408.50 249.4L408.80 244.4L409.10 248.4L409.40 246.6L409.70 243.3L410.00 245.0L410.30 241.3L410.60 243.3L410.90 239.5L411.20 252.0L411.50 245.2L411.80 243.4L412.10 247.0L412.40 247.1L412.70 246.9L413.00 243.6L413.30 244.4L413.60 245.7L413.90 242.6L414.20 240.8L414.50 244.1L414.80 239.6L415.10 242.0L415.40 245.2L415.70 243.0L416.00 243.2L416.30 248.3L416.60 239.8L416.90 243.9L417.20 250.0L417.50 247.7L417.80 244.7L418.10 249.4L418.40 248.7L418.70 243.3L419.00 247.1L419.30 239.4L419.60 241.3L419.90 243.6L420.20 235.2L420.50 236.2L420.80 253.2L421.10 244.6L421.40 245.4L421.70 241.7L422.00 243.4L422.30 251.0L422.60 242.4L422.90 248.0L423.20 245.0L423.50 241.7L423.80 247.8L424.10 243.8L424.40 243.4L424.70 243.6L425.00 241.7L425.30 250.5L425.60 244.5L425.90 252.0L426.20 243.2L426.50 235.4L426.80 243.5L427.10 246.5L427.40 241.8L427.70 248.1L428.00 250.8L428.30 242.9L428.60 243.8L428.90 245.9L429.20 247.7L429.50 246.1L429.80 244.6L430.10 244.4L430.40 250.6L430.70 244.8L431.00 244.9L431.30 244.2L431.60 245.1L431.90 236.7L432.20 239.7L432.50 244.1L432.80 243.1L433.10 247.5L433.40 244.3L433.70 246.4L434.00 247.5L434.30 245.2L434.60 242.6L434.90 237.5L435.20 246.8L435.50 243.1L435.80 241.8L436.10 244.8L436.40 240.9L436.70 241.9L437.00 242.4L437.30 237.9L437.60 242.4L437.90 243.5L438.20 246.7L438.50 244.7L438.80 249.7L439.10 247.9L439.40 243.3L439.70 245.5L440.00 247.5L440.30 243.3L440.60 248.1L440.90 252.2L441.20 242.5L441.50 250.4L441.80 245.4L442.10 243.1L442.40 243.0L442.70 247.6L443.00 243.8L443.30 243.8L443.60 250.3L443.90 241.7L444.20 250.8L444.50 243.2L444.80 248.9L445.10 245.2L445.40 241.4L445.70 235.3L446.00 248.4L446.30 244.1L446.60 239.5L446.90 247.0L447.20 240.3L447.50 243.8L447.80 254.1L448.10 243.0L448.40 247.2L448.70 253.0L449.00 241.1L449.30 248.7L449.60 248.0L449.90 245.3L450.20 243.0L450.50 248.0L450.80 239.4L451.10 245.6L451.40 242.4L451.70 248.0L452.00 244.2L452.30 236.1L452.60 239.9L452.90 245.9L453.20 244.3L453.50 243.2L453.80 247.3L454.10 243.0L454.40 245.3L454.70 243.4L455.00 240.8L455.30 239.9L455.60 247.4L455.90 242.3L456.20 250.6L456.50 241.0L456.80 246.9L457.10 244.0L457.40 246.2L457.70 244.1L458.00 240.1L458.30 246.7L458.60 240.5L458.90 242.5L459.20 246.2L459.50 239.4L459.80 238.9L460.10 243.5L460.40 244.5L460.70 237.4L461.00 245.4L461.30 239.6L461.60 239.6L461.90 250.4L462.20 243.9L462.50 245.4L462.80 252.7L463.10 244.2L463.40 244.6L463.70 244.7L464.00 244.8L464.30 243.1L464.60 247.6L464.90 250.8L465.20 245.4L465.50 247.0L465.80 244.6L466.10 246.3L466.40 250.5L466.70 240.4L467.00 244.6L467.30 241.0L467.60 241.3L467.90 243.1L468.20 245.5L468.50 249.3L468.80 239.2L469.10 246.0L469.40 247.3L469.70 247.2L470.00 238.9L470.30 244.3L470.60 248.9L470.90 243.5L471.20 245.6L471.50 246.3L471.80 246.6L472.10 238.2L472.40 243.6L472.70 242.6L473.00 244.2L473.30 247.3L473.60 246.0L473.90 246.6L474.20 245.8L474.50 246.0L474.80 244.8L475.10 249.6L475.40 247.3L475.70 241.6L476.00 244.0L476.30 241.0L476.60 246.5L476.90 245.1L477.20 240.5L477.50 253.1L477.80 242.4L478.10 241.4L478.40 243.1L478.70 245.5L479.00 249.7L479.30 243.2L479.60 239.5L479.90 245.4L480.20 242.1L480.50 247.9L480.80 242.4L481.10 240.6L481.40 245.4L481.70 243.3L482.00 244.7L482.30 242.4L482.60 247.8L482.90 245.0L483.20 245.1L483.50 244.0L483.80 247.6L484.10 235.1L484.40 244.9L484.70 245.5L485.00 247.6L485.30 248.1L485.60 243.8L485.90 241.8M486.00 344.7L486.30 356.3L486.60 350.1L486.90 353.2L487.20 350.4L487.50 346.7L487.80 355.4L488.10 350.0L488.40 346.8L488.70 349.8L489.00 348.0L489.30 351.2L489.60 349.8L489.90 348.6L490.20 346.6L490.50 349.7L490.80 344.8L491.10 348.1L491.40 350.1L491.70 351.7L492.00 354.0L492.30 350.4L492.60 351.3L492.90 347.6L493.20 355.6L493.50 343.1L493.80 344.0L494.10 354.6L494.40 350.3L494.70 350.8L495.00 351.2L495.30 346.4L495.60 348.5L495.90 345.9L496.20 354.0L496.50 349.4L496.80 348.1L497.10 348.0L497.40 353.6L497.70 339.6L498.00 347.9L498.30 351.1L498.60 350.4L498.90 349.2L499.20 352.4L499.50 347.1L499.80 347.3L500.10 350.3L500.40 347.1L500.70 349.5L501.00 348.6L501.30 351.2L501.60 347.7L501.90 344.1L502.20 347.8L502.50 345.4L502.80 349.2L503.10 349.3L503.40 349.3L503.70 342.5L504.00 341.6L504.30 352.4L504.60 352.3L504.90 352.7L505.20 348.1L505.50 351.3L505.80 351.5L506.10 348.7L506.40 348.2L506.70 347.6L507.00 354.8L507.30 351.6L507.60 343.8L507.90 344.6L508.20 345.4L508.50 350.0L508.80 349.7L509.10 350.2L509.40 349.8L509.70 342.9L510.00 354.9L510.30 342.3L510.60 345.6L510.90 339.6L511.20 343.6L511.50 345.7L511.80 346.8L512.10 352.1L512.40 348.7L512.70 349.8L513.00 344.9L513.30 348.1L513.60 352.1L513.90 348.6L514.20 344.3L514.50 351.9L514.80 342.1L515.10 355.3L515.40 350.2L515.70 346.9L516.00 345.5L516.30 349.9L516.60 350.9L516.90 346.9L517.20 347.4L517.50 352.8L517.80 349.1L518.10 341.2L518.40 345.7L518.70 347.5L519.00 351.8L519.30 351.3L519.60 348.2L519.90 344.5L520.20 348.0L520.50 348.9L520.80 348.6L521.10 346.0L521.40 345.0L521.70 350.5L522.00 344.4L522.30 351.6L522.60 345.9L522.90 354.1L523.20 345.2L523.50 351.3L523.80 350.1L524.10 352.3L524.40 357.0L524.70 352.1L525.00 349.8L525.30 349.3L525.60 347.1L525.90 347.3L526.20 349.8L526.50 345.6L526.80 344.2L527.10 354.1L527.40 351.2L527.70 346.8L528.00 348.3L528.30 352.3L528.60 347.8L528.90 346.0L529.20 352.5L529.50 347.6L529.80 351.6L530.10 350.3L530.40 351.4L530.70 347.0L531.00 356.9L531.30 347.7L531.60 349.5L531.90 348.4L532.20 347.2L532.50 343.4L532.80 348.7L533.10 347.6L533.40 346.6L533.70 344.6L534.00 346.6L534.30 342.9L534.60 351.0L534.90 357.7L535.20 350.9L535.50 351.7L535.80 353.6L536.10 345.6L536.40 344.5L536.70 350.3L537.00 344.6L537.30 348.1L537.60 351.6L537.90 351.8L538.20 344.7L538.50 349.1L538.80 347.3L539.10 344.4L539.40 347.4L539.70 346.8L540.00 345.6L540.30 350.8L540.60 347.7L540.90 347.4L541.20 349.2L541.50 348.4L541.80 345.1L542.10 354.2L542.40 350.3L542.70 352.7L543.00 346.8L543.30 345.1L543.60 345.7L543.90 348.0L544.20 348.6L544.50 347.5L544.80 347.1L545.10 345.8L545.40 351.0L545.70 347.4L546.00 347.3L546.30 351.3L546.60 352.9L546.90 350.2L547.20 340.5L547.50 350.9L547.80 342.9L548.10 349.5L548.40 350.9L548.70 348.7L549.00 345.5L549.30 350.9L549.60 349.3L549.90 346.1L550.20 350.7L550.50 345.8L550.80 345.6L551.10 347.5L551.40 352.2L551.70 350.6L552.00 351.3L552.30 355.4L552.60 351.0L552.90 352.8L553.20 349.5L553.50 343.3L553.80 350.8L554.10 344.9L554.40 350.5L554.70 348.8L555.00 349.8L555.30 348.0L555.60 347.3L555.90 350.7L556.20 347.0L556.50 345.6L556.80 347.6L557.10 347.5L557.40 345.6L557.70 347.3L558.00 343.5L558.30 349.6L558.60 349.4L558.90 346.6L559.20 345.6L559.50 348.3L559.80 350.3L560.10 346.0L560.40 347.0L560.70 344.1L561.00 350.2L561.30 350.8L561.60 349.9L561.90 347.3L562.20 347.1L562.50 346.0L562.80 350.5L563.10 348.6L563.40 349.9L563.70 356.3L564.00 345.9L564.30 348.6L564.60 347.6L564.90 351.4L565.20 344.9L565.50 346.6L565.80 349.0L566.10 353.0L566.40 352.8L566.70 347.0L567.00 352.4L567.30 349.4L567.60 352.8L567.90 351.5L568.20 350.0L568.50 348.8L568.80 350.2L569.10 348.7L569.40 352.8L569.70 347.2L570.00 344.5L570.30 351.3L570.60 347.0L570.90 347.2L571.20 348.2L571.50 346.7L571.80 350.4L572.10 349.9L572.40 345.5L572.70 348.5L573.00 349.0L573.30 347.2L573.60 348.0L573.90 345.6L574.20 344.5L574.50 347.7L574.80 348.1L575.10 348.8L575.40 347.4L575.70 348.9L576.00 351.5M576.00 245.6L576.30 249.6L576.60 240.8L576.90 241.1L577.20 243.2L577.50 241.6L577.80 245.0L578.10 240.1L578.40 252.5L578.70 243.0L579.00 241.9L579.30 238.9L579.60 239.9L579.90 248.2L580.20 245.6L580.50 244.0L580.80 249.8L581.10 248.2L581.40 244.9L581.70 246.3L582.00 240.8L582.30 247.0L582.60 240.5L582.90 244.4L583.20 244.0L583.50 243.1L583.80 244.9L584.10 240.5L584.40 248.0L584.70 246.9L585.00 246.8L585.30 249.6L585.60 245.9L585.90 243.0L586.20 244.1L586.50 241.0L586.80 241.9L587.10 246.8L587.40 243.8L587.70 241.6L588.00 253.0L588.30 245.2L588.60 246.8L588.90 244.0L589.20 248.3L589.50 249.9L589.80 244.1L590.10 248.5L590.40 247.6L590.70 242.6L591.00 247.6L591.30 247.2L591.60 241.9L591.90 243.7L592.20 248.4L592.50 242.2L592.80 242.9L593.10 238.8L593.40 243.8L593.70 248.2L594.00 244.4L594.30 239.0L594.60 242.0L594.90 247.2L595.20 247.7L595.50 250.1L595.80 250.2L596.10 236.8L596.40 252.6L596.70 246.5L597.00 244.7L597.30 241.3L597.60 246.8L597.90 246.8L598.20 241.5L598.50 249.0L598.80 245.7L599.10 242.9L599.40 240.9L599.70 243.0L600.00 245.0L600.30 246.7L600.60 245.1L600.90 240.3L601.20 246.9L601.50 241.4L601.80 243.5L602.10 241.4L602.40 246.4L602.70 248.3L603.00 241.8L603.30 241.5L603.60 240.9L603.90 245.1L604.20 242.0L604.50 244.4L604.80 245.3L605.10 246.9L605.40 248.5L605.70 240.9L606.00 252.3L606.30 245.0L606.60 240.8L606.90 244.1L607.20 248.5L607.50 242.1L607.80 246.7L608.10 242.7L608.40 245.5L608.70 243.7L609.00 246.2L609.30 239.8L609.60 248.1L609.90 235.1L610.20 244.1L610.50 239.7L610.80 242.3L611.10 244.5L611.40 247.5L611.70 240.4L612.00 237.1L612.30 242.4L612.60 246.8L612.90 244.2L613.20 244.4L613.50 250.7L613.80 246.6L614.10 238.3L614.40 242.1L614.70 247.2L615.00 243.5L615.30 243.2L615.60 249.4L615.90 248.4L616.20 243.7L616.50 242.7L616.80 243.3L617.10 244.4L617.40 240.2L617.70 242.1L618.00 242.1L618.30 249.4L618.60 245.0L618.90 248.3L619.20 242.9L619.50 245.1L619.80 244.6L620.10 238.7L620.40 249.2L620.70 244.4L621.00 244.1L621.30 252.8L621.60 242.7L621.90 249.0L622.20 248.8L622.50 253.7L622.80 245.5L623.10 243.3L623.40 245.4L623.70 239.7L624.00 244.1L624.30 249.1L624.60 240.3L624.90 243.6L625.20 244.3L625.50 246.7L625.80 246.1L626.10 243.8L626.40 250.6L626.70 237.7L627.00 246.9L627.30 246.3L627.60 244.5L627.90 248.3L628.20 246.7L628.50 246.7L628.80 249.3L629.10 248.2L629.40 246.7L629.70 238.6L630.00 245.2L630.30 243.4L630.60 245.9L630.90 251.8L631.20 248.5L631.50 247.3L631.80 243.5L632.10 242.5L632.40 247.8L632.70 241.2L633.00 251.0L633.30 247.2L633.60 241.4L633.90 242.5L634.20 243.9L634.50 251.3L634.80 238.0L635.10 243.7L635.40 240.2L635.70 244.4L636.00 239.6L636.30 244.3L636.60 245.7L636.90 239.7L637.20 243.4L637.50 247.4L637.80 250.0L638.10 244.5L638.40 246.3L638.70 243.7L639.00 239.8L639.30 249.4L639.60 248.3L639.90 249.3L640.20 239.4L640.50 245.8L640.80 244.8L641.10 241.1L641.40 245.5L641.70 247.5L642.00 247.8L642.30 248.1L642.60 242.6L642.90 241.9L643.20 244.8L643.50 237.8L643.80 244.0L644.10 242.8L644.40 243.6L644.70 244.3L645.00 246.4L645.30 244.4L645.60 250.0L645.90 243.6L646.20 245.6L646.50 246.8L646.80 246.5L647.10 245.6L647.40 245.3L647.70 242.0L648.00 246.7L648.30 247.1L648.60 245.6L648.90 240.6L649.20 246.1L649.50 245.0L649.80 244.8L650.10 242.4L650.40 247.6L650.70 240.5L651.00 248.2L651.30 245.5L651.60 243.6L651.90 239.7L652.20 239.1L652.50 240.7L652.80 247.1L653.10 242.7L653.40 248.9L653.70 242.5L654.00 243.7L654.30 244.7L654.60 242.9L654.90 247.4L655.20 244.5L655.50 237.7L655.80 247.4L656.10 247.4L656.40 243.1L656.70 245.9L657.00 242.9L657.30 242.1L657.60 238.9L657.90 248.5L658.20 239.6L658.50 242.3L658.80 240.7L659.10 242.4L659.40 243.1L659.70 239.5L660.00 239.0L660.30 245.1L660.60 252.8L660.90 247.6L661.20 243.3L661.50 244.3L661.80 245.5L662.10 243.6L662.40 249.8L662.70 249.3L663.00 245.1L663.30 246.4L663.60 242.5L663.90 237.1L664.20 237.2L664.50 246.7L664.80 246.3L665.10 244.9L665.40 243.4L665.70 248.4L666.00 248.4M666.00 351.4L666.30 345.0L666.60 348.6L666.90 348.8L667.20 349.4L667.50 348.5L667.80 346.6L668.10 353.3L668.40 347.5L668.70 344.5L669.00 349.8L669.30 351.1L669.60 350.0L669.90 342.7L670.20 348.0L670.50 344.4L670.80 351.7L671.10 350.3L671.40 348.4L671.70 348.1L672.00 347.5L672.30 355.9L672.60 345.7L672.90 351.6L673.20 346.9L673.50 349.1L673.80 343.5L674.10 351.7L674.40 350.2L674.70 350.0L675.00 352.1L675.30 351.8L675.60 340.6L675.90 345.0L676.20 350.0L676.50 347.8L676.80 350.2L677.10 351.2L677.40 345.2L677.70 347.3L678.00 344.7L678.30 345.9L678.60 353.9L678.90 346.4L679.20 351.1L679.50 351.3L679.80 348.1L680.10 344.0L680.40 347.5L680.70 342.6L681.00 348.7" stroke="#00ebeb" stroke-width="0.8" fill="none" stroke-linejoin="bevel" opacity="1.0"/>
<path d="M16.5 175.5 H24 L29 180.7 L24 186 H16.5 Z" fill="#000" stroke="#ffff00" stroke-width="1.3"/>
<path d="M19.6 178.6 L21.8 177 V184.5" stroke="#ffff00" stroke-width="1.6" fill="none"/>
<path d="M16 344.5 H24 L29 349.6 L24 355 H16 Z" fill="#00ebeb"/>
<text x="18.2" y="353.6" font-size="10.5" font-weight="bold" fill="#000" stroke="#000" stroke-width="0.3">2</text>
<path d="M674 126.6 L678.5 123 V130.2 Z" fill="#ffff00"/>
<path d="M678 126.6 H681" stroke="#ffff00" stroke-width="1"/>
<rect x="96" y="1" width="519" height="9" fill="#000"/>
<path d="M200.5 5.5 H509.5" stroke="#009a90" stroke-width="1.2"/>
<path d="M201 1.5 Q199 5.5 201 9.5 M509 1.5 Q511 5.5 509 9.5" stroke="#c8b8b8" stroke-width="1.3" fill="none"/>
<path d="M352.8 1 H358.2 L356.8 2.6 V9 L355.5 10 L354.2 9 V2.6 Z" fill="#ffa000"/>
<path d="M355.5 3 V9" stroke="#000" stroke-width="1"/>
<path d="M352 11 H359 L355.5 14.8 Z" fill="#ffa000"/>
<path d="M351 16.5 Q355.5 14.6 359.8 16.5 V22.5 L355.5 25.2 L351 22.5 Z" fill="#ffa000"/>
<path d="M351.6 16.6 Q355.5 15.2 359.3 16.6" stroke="#7a5000" stroke-width="0.9" fill="none"/>
<path d="M352.5 17.6 H358.5 M355.5 17.6 V23" stroke="#000" stroke-width="1.1"/>
<text x="17.0" y="9.4" fill="#5c00a0" stroke="#5c00a0" stroke-width="0.3" font-family="Liberation Serif" font-size="12.5" font-weight="bold" textLength="19" lengthAdjust="spacingAndGlyphs">Tek</text>
<text x="38.7" y="8.9" fill="#ffffff" font-size="11" font-weight="bold" textLength="23.1" lengthAdjust="spacing" stroke="#ffffff" stroke-width="0.2" >Stop</text>
<rect x="29.5" y="424.5" width="361" height="13.5" rx="4" fill="#000" stroke="#8a8a86" stroke-width="1"/>
<rect x="31.0" y="426.0" width="358" height="10.5" rx="2.5" fill="#0a0a07"/>
<rect x="29.5" y="439.5" width="361" height="58.5" rx="4" fill="#000" stroke="#8a8a86" stroke-width="1"/>
<rect x="31.0" y="441.0" width="358" height="55.5" rx="2.5" fill="#0a0a07"/>
<path d="M31 438.5 H388 M31 499.5 H388" stroke="#a0a8e0" stroke-width="1"/>
<path d="M30 436.5 L34 438.5 L30 440.5 Z M390.5 436 L386.5 438.5 L390.5 441 Z" fill="#3b4992"/>
<rect x="33" y="427" width="16.4" height="10" rx="5.0" fill="#ffff00"/>
<text x="41.2" y="435.4" fill="#000" stroke="#000" stroke-width="0.3" font-size="10" font-weight="bold" text-anchor="middle">1</text>
<text x="60.9" y="435.2" fill="#ffff00" font-size="10.0" font-weight="normal" textLength="32.1" lengthAdjust="spacing" stroke="#ffff00" stroke-width="0.2" >2.00 V</text>
<rect x="123.6" y="427" width="16.4" height="10" rx="5.0" fill="#00ebeb"/>
<text x="131.8" y="435.4" fill="#000" stroke="#000" stroke-width="0.3" font-size="10" font-weight="bold" text-anchor="middle">2</text>
<text x="151.4" y="435.2" fill="#00ebeb" font-size="10.0" font-weight="normal" textLength="32.6" lengthAdjust="spacing" stroke="#00ebeb" stroke-width="0.2" >2.00 V</text>
<text x="118.9" y="449.2" fill="#f0f0f0" font-size="10.0" font-weight="normal" textLength="28.6" lengthAdjust="spacing" stroke="#f0f0f0" stroke-width="0.2" >Value</text>
<text x="176.9" y="449.2" fill="#f0f0f0" font-size="10.0" font-weight="normal" textLength="27.2" lengthAdjust="spacing" stroke="#f0f0f0" stroke-width="0.2" >Mean</text>
<text x="230.8" y="449.2" fill="#f0f0f0" stroke="#f0f0f0" stroke-width="0.2" font-size="10.0" textLength="19.7" lengthAdjust="spacingAndGlyphs">Min</text>
<text x="283.8" y="449.2" fill="#f0f0f0" stroke="#f0f0f0" stroke-width="0.2" font-size="10.0" textLength="19.4" lengthAdjust="spacingAndGlyphs">Max</text>
<text x="337.0" y="449.2" fill="#f0f0f0" font-size="10.0" font-weight="normal" textLength="40.1" lengthAdjust="spacing" stroke="#f0f0f0" stroke-width="0.2" >Std Dev</text>
<rect x="33" y="452.3" width="16.4" height="10" rx="5.0" fill="#ffff00"/>
<text x="41.2" y="460.7" fill="#000" stroke="#000" stroke-width="0.3" font-size="10" font-weight="bold" text-anchor="middle">1</text>
<text x="55.4" y="461.1" fill="#ffff00" font-size="10.0" font-weight="normal" textLength="21.7" lengthAdjust="spacing" stroke="#ffff00" stroke-width="0.2" >Freq</text>
<text x="119.4" y="461.1" fill="#ffff00" font-size="10.0" font-weight="normal" textLength="47.8" lengthAdjust="spacing" stroke="#ffff00" stroke-width="0.2" >1.871kHz</text>
<text x="177.4" y="461.1" fill="#ffff00" font-size="10.0" font-weight="normal" textLength="34.9" lengthAdjust="spacing" stroke="#ffff00" stroke-width="0.2" >1.795k</text>
<text x="231.3" y="461.1" fill="#ffff00" font-size="10.0" font-weight="normal" textLength="34.9" lengthAdjust="spacing" stroke="#ffff00" stroke-width="0.2" >1.146k</text>
<text x="284.3" y="461.1" fill="#ffff00" font-size="10.0" font-weight="normal" textLength="34.9" lengthAdjust="spacing" stroke="#ffff00" stroke-width="0.2" >1.880k</text>
<text x="337.5" y="461.1" fill="#ffff00" font-size="10.0" font-weight="normal" textLength="29.0" lengthAdjust="spacing" stroke="#ffff00" stroke-width="0.2" >152.0</text>
<rect x="33" y="464.2" width="16.4" height="10" rx="5.0" fill="#ffff00"/>
<text x="41.2" y="472.6" fill="#000" stroke="#000" stroke-width="0.3" font-size="10" font-weight="bold" text-anchor="middle">1</text>
<text x="55.4" y="472.6" fill="#ffff00" font-size="10.0" font-weight="normal" textLength="32.7" lengthAdjust="spacing" stroke="#ffff00" stroke-width="0.2" >+Duty</text>
<text x="118.9" y="472.6" fill="#ffff00" font-size="10.0" font-weight="normal" textLength="41.8" lengthAdjust="spacing" stroke="#ffff00" stroke-width="0.2" >51.95 %</text>
<text x="176.9" y="472.6" fill="#ffff00" font-size="10.0" font-weight="normal" textLength="29.0" lengthAdjust="spacing" stroke="#ffff00" stroke-width="0.2" >52.03</text>
<text x="230.8" y="472.6" fill="#ffff00" font-size="10.0" font-weight="normal" textLength="29.0" lengthAdjust="spacing" stroke="#ffff00" stroke-width="0.2" >45.03</text>
<text x="283.8" y="472.6" fill="#ffff00" font-size="10.0" font-weight="normal" textLength="29.0" lengthAdjust="spacing" stroke="#ffff00" stroke-width="0.2" >53.77</text>
<text x="337.5" y="472.6" fill="#ffff00" font-size="10.0" font-weight="normal" textLength="29.0" lengthAdjust="spacing" stroke="#ffff00" stroke-width="0.2" >1.787</text>
<rect x="33" y="476.2" width="16.4" height="10" rx="5.0" fill="#00ebeb"/>
<text x="41.2" y="484.6" fill="#000" stroke="#000" stroke-width="0.3" font-size="10" font-weight="bold" text-anchor="middle">2</text>
<text x="55.4" y="484.6" fill="#00ebeb" font-size="10.0" font-weight="normal" textLength="21.7" lengthAdjust="spacing" stroke="#00ebeb" stroke-width="0.2" >Freq</text>
<text x="119.4" y="484.6" fill="#00ebeb" font-size="10.0" font-weight="normal" textLength="47.8" lengthAdjust="spacing" stroke="#00ebeb" stroke-width="0.2" >1.893kHz</text>
<text x="177.4" y="484.6" fill="#00ebeb" font-size="10.0" font-weight="normal" textLength="34.9" lengthAdjust="spacing" stroke="#00ebeb" stroke-width="0.2" >1.796k</text>
<text x="231.3" y="484.6" fill="#00ebeb" font-size="10.0" font-weight="normal" textLength="34.9" lengthAdjust="spacing" stroke="#00ebeb" stroke-width="0.2" >1.145k</text>
<text x="284.3" y="484.6" fill="#00ebeb" font-size="10.0" font-weight="normal" textLength="34.9" lengthAdjust="spacing" stroke="#00ebeb" stroke-width="0.2" >1.893k</text>
<text x="337.5" y="484.6" fill="#00ebeb" font-size="10.0" font-weight="normal" textLength="29.0" lengthAdjust="spacing" stroke="#00ebeb" stroke-width="0.2" >151.6</text>
<rect x="33" y="488.0" width="16.4" height="10" rx="5.0" fill="#00ebeb"/>
<text x="41.2" y="496.4" fill="#000" stroke="#000" stroke-width="0.3" font-size="10" font-weight="bold" text-anchor="middle">2</text>
<text x="55.4" y="496.4" fill="#00ebeb" font-size="10.0" font-weight="normal" textLength="32.7" lengthAdjust="spacing" stroke="#00ebeb" stroke-width="0.2" >+Duty</text>
<text x="118.9" y="496.4" fill="#00ebeb" font-size="10.0" font-weight="normal" textLength="41.8" lengthAdjust="spacing" stroke="#00ebeb" stroke-width="0.2" >50.12 %</text>
<text x="176.9" y="496.4" fill="#00ebeb" font-size="10.0" font-weight="normal" textLength="29.0" lengthAdjust="spacing" stroke="#00ebeb" stroke-width="0.2" >50.47</text>
<text x="230.8" y="496.4" fill="#00ebeb" font-size="10.0" font-weight="normal" textLength="29.0" lengthAdjust="spacing" stroke="#00ebeb" stroke-width="0.2" >45.33</text>
<text x="283.8" y="496.4" fill="#00ebeb" font-size="10.0" font-weight="normal" textLength="29.0" lengthAdjust="spacing" stroke="#00ebeb" stroke-width="0.2" >51.92</text>
<text x="337.5" y="496.4" fill="#00ebeb" font-size="10.0" font-weight="normal" textLength="29.0" lengthAdjust="spacing" stroke="#00ebeb" stroke-width="0.2" >1.457</text>
<rect x="397" y="437" width="97" height="24" rx="4" fill="#000" stroke="#8a8a86" stroke-width="1"/>
<rect x="398.5" y="438.5" width="94" height="21" rx="2.5" fill="#0a0a07"/>
<text x="400.7" y="447.0" fill="#f0f0f0" font-size="10.0" font-weight="normal" textLength="31.3" lengthAdjust="spacing" stroke="#f0f0f0" stroke-width="0.2" >200µs</text>
<rect x="400.7" y="450.4" width="6.8" height="8" rx="1" fill="#ffa000"/>
<path d="M402 452 H406.2 M404.1 452 V457.2" stroke="#000" stroke-width="1.2"/>
<path d="M408 454.5 H413 M411 452.5 L413.2 454.5 L411 456.5" stroke="#ffa000" stroke-width="1" fill="none"/>
<path d="M414.5 451.5 H422 L418.2 456 Z" fill="#ffa000"/>
<text x="425.8" y="458.2" fill="#ffa000" font-size="10.0" font-weight="normal" textLength="50.2" lengthAdjust="spacing" stroke="#ffa000" stroke-width="0.2" >0.00000 s</text>
<rect x="500" y="437" width="68" height="24" rx="4" fill="#000" stroke="#8a8a86" stroke-width="1"/>
<rect x="501.5" y="438.5" width="65" height="21" rx="2.5" fill="#0a0a07"/>
<text x="503.0" y="446.7" fill="#f0f0f0" font-size="10.0" font-weight="normal" textLength="49.1" lengthAdjust="spacing" stroke="#f0f0f0" stroke-width="0.2" >5.00MS/s</text>
<text x="503.0" y="458.2" fill="#f0f0f0" font-size="10.0" font-weight="normal" textLength="55.4" lengthAdjust="spacing" stroke="#f0f0f0" stroke-width="0.2" >10k points</text>
<rect x="575" y="437" width="107" height="24" rx="4" fill="#000" stroke="#8a8a86" stroke-width="1"/>
<rect x="576.5" y="438.5" width="104" height="21" rx="2.5" fill="#0a0a07"/>
<rect x="595" y="438.4" width="16.8" height="10.2" rx="5.1" fill="#ffff00"/>
<text x="603.4" y="447.0" fill="#000" stroke="#000" stroke-width="0.3" font-size="10" font-weight="bold" text-anchor="middle">1</text>
<path d="M620.5 447 H622.5 L626 440.5 H628.5" stroke="#f0f0f0" stroke-width="1.3" fill="none"/>
<text x="643.0" y="447.2" fill="#f0f0f0" font-size="10.0" font-weight="normal" textLength="32.8" lengthAdjust="spacing" stroke="#f0f0f0" stroke-width="0.2" >2.56 V</text>
<rect x="608.5" y="475" width="73.5" height="23" rx="4" fill="#000" stroke="#8a8a86" stroke-width="1"/>
<rect x="610.0" y="476.5" width="70.5" height="20" rx="2.5" fill="#0a0a07"/>
<text x="613.3" y="485.3" fill="#f0f0f0" font-size="10.0" font-weight="normal" textLength="64.4" lengthAdjust="spacing" stroke="#f0f0f0" stroke-width="0.2" >12 May 2011</text>
<text x="613.3" y="495.6" fill="#f0f0f0" font-size="10.0" font-weight="normal" textLength="45.4" lengthAdjust="spacing" stroke="#f0f0f0" stroke-width="0.2" >14:53:52</text>
</svg>
</body></html>
